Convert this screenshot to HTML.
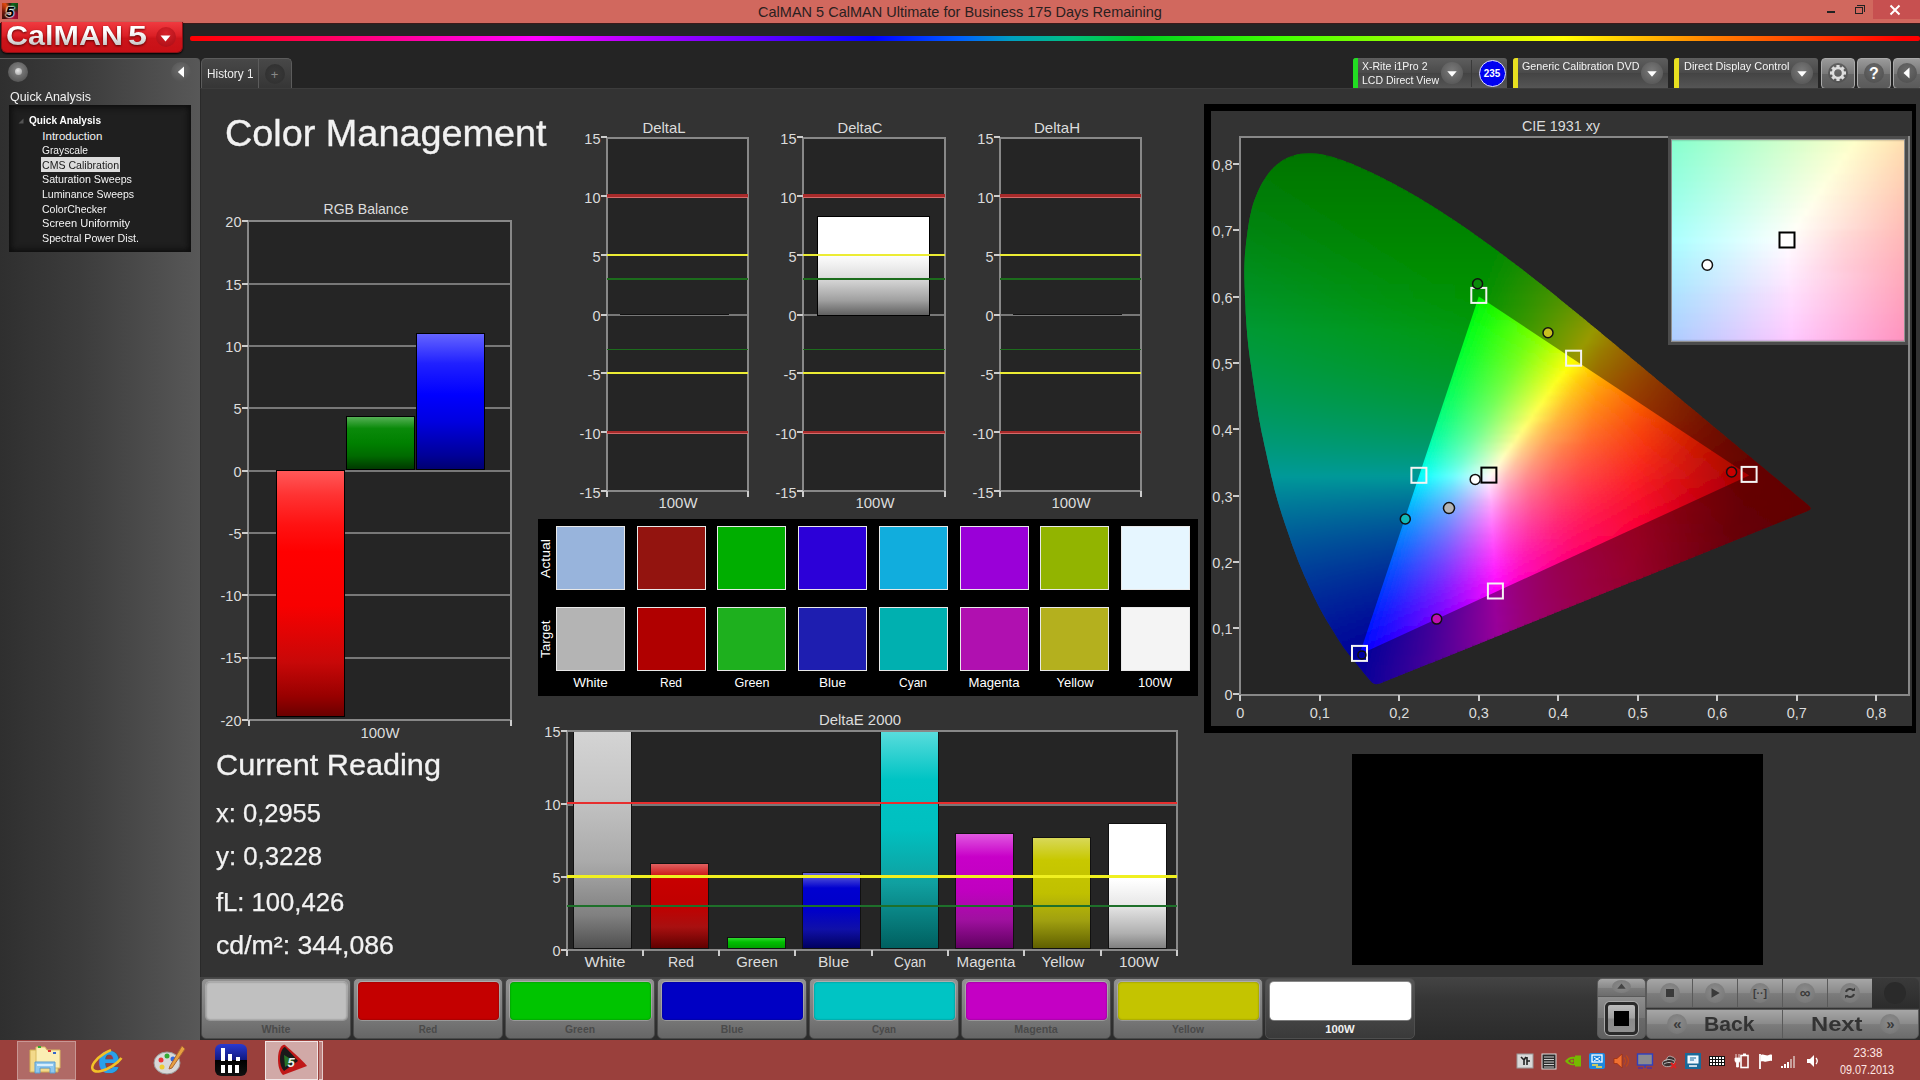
<!DOCTYPE html>
<html><head><meta charset="utf-8"><title>CalMAN 5</title>
<style>
html,body{margin:0;padding:0;background:#262626;}
body{width:1920px;height:1080px;position:relative;overflow:hidden;font-family:"Liberation Sans",sans-serif;}
div,span,svg{position:absolute;box-sizing:border-box;}
.t{white-space:nowrap;line-height:1;}
.plot{background:#252525;border:2px solid #888;}
.gl{background:#8a8a8a;height:2px;}
.bar{border:1px solid #000;}
.sw{border:1px solid #e8e8e8;}
.btn{background:linear-gradient(#a8a8a8,#8c8c8c 48%,#7a7a7a 52%,#6a6a6a);border:1px solid #555;border-radius:4px;}
.cb{border-radius:4px;background:linear-gradient(#8a8a8a,#6c6c6c);border:1px solid #555;}
.rnd{border-radius:50%;}
</style></head><body>
<div style="position:absolute;left:0px;top:0px;width:1920px;height:24px;background:#d1685e;border-bottom:1px solid #3a1a1a;"></div>
<div style="position:absolute;left:2px;top:3px;width:16px;height:16px;background:conic-gradient(from 20deg,#0a6a1a,#1a3a10 12%,#8a0a28 25%,#b0103a 40%,#3a0a08 55%,#7a1a08 70%,#e04a10 85%,#2a2010 94%,#0a6a1a);"></div>
<span class="t" style="left:5.5px;top:3.9px;font-size:15.5px;color:#000;font-weight:700;font-style:italic;text-shadow:0 0 1.5px #fff,0 0 1.5px #fff,0 0 2px #dfd,0 0 2px #fff;">5</span>
<span class="t" style="left:960.0px;top:4.3px;font-size:15px;color:#2a2020;transform:translateX(-50%) scaleX(0.967);transform-origin:50% 0;">CalMAN 5 CalMAN Ultimate for Business 175 Days Remaining</span>
<div style="position:absolute;left:1827px;top:11px;width:8px;height:2px;background:#222;"></div>
<div style="position:absolute;left:1855px;top:7px;width:8px;height:7px;border:1px solid #222;"></div>
<div style="position:absolute;left:1857px;top:5px;width:8px;height:7px;border:1px solid #222;border-left:none;border-bottom:none;"></div>
<div style="position:absolute;left:1873px;top:0px;width:47px;height:19px;background:#c75050;"></div>
<svg style="left:1889px;top:4px" width="12" height="12" viewBox="0 0 12 12"><path d="M1.5 1.5L10.5 10.5M10.5 1.5L1.5 10.5" stroke="#fff" stroke-width="2"/></svg>
<div style="position:absolute;left:0px;top:24px;width:1920px;height:65px;background:#242424;"></div>
<div style="position:absolute;left:1px;top:22px;width:182px;height:31px;background:linear-gradient(#f03a40,#dc2026 45%,#cc141a 55%,#c81016);border-radius:0 0 6px 6px;border:1px solid #8a1015;border-top:none;box-shadow:0 1px 2px #000;"></div>
<span class="t" style="left:5.5px;top:22.6px;font-size:27px;color:transparent;font-weight:700;transform:scaleX(1.130);transform-origin:0 0;background:linear-gradient(#fff 35%,#c4c4c4 85%);-webkit-background-clip:text;background-clip:text;filter:drop-shadow(0 1px 1px #5a0000);">CalMAN</span>
<span class="t" style="left:128.0px;top:21.8px;font-size:28px;color:transparent;font-weight:700;transform:scaleX(1.220);transform-origin:0 0;background:linear-gradient(#fff 35%,#c4c4c4 85%);-webkit-background-clip:text;background-clip:text;filter:drop-shadow(0 1px 1px #5a0000);">5</span>
<div style="position:absolute;left:156px;top:27px;width:20px;height:20px;background:radial-gradient(circle at 50% 30%,#d8222a,#a80c14);border-radius:50%;"></div>
<svg style="left:160px;top:35px" width="11" height="7" viewBox="0 0 11 7"><path d="M0.5 0.5H10.5L5.5 6.5Z" fill="#fff"/></svg>
<div style="position:absolute;left:190px;top:36px;width:1730px;height:4.5px;background:linear-gradient(90deg,#ff0000 0%,#ff0060 8%,#ff00c0 15%,#ff00ff 20%,#b000ff 26%,#6000ff 33%,#0000ff 39.5%,#0060ff 44.5%,#00a0c0 47.5%,#00c080 51%,#00d020 55%,#40ff00 63%,#a0ff00 71%,#ffff00 79.4%,#ff8000 88%,#ff0000 99%);filter:blur(0.7px);border-radius:2px;"></div>
<div style="position:absolute;left:0px;top:58px;width:200px;height:982px;background:linear-gradient(90deg,#2f2f2f,#3c3c3c 40%,#585858 100%);border-top:1px solid #5a5a5a;border-radius:0 4px 0 0;"></div>
<div style="position:absolute;border-radius:50%;left:8px;top:62px;width:20px;height:20px;background:radial-gradient(circle at 50% 40%,#8a8a8a,#5a5a5a 70%,#4a4a4a);"></div>
<div style="position:absolute;left:14.5px;top:67.5px;width:7px;height:7px;background:radial-gradient(circle at 40% 35%,#e8e8e8,#9a9a9a);border-radius:50%;"></div>
<div style="position:absolute;left:171px;top:62px;width:20px;height:20px;background:radial-gradient(circle at 50% 40%,#6e6e6e,#555 70%);border-radius:50%;"></div>
<svg style="left:177px;top:66px" width="8" height="12" viewBox="0 0 8 12"><path d="M7 0.5V11.5L0.8 6Z" fill="#fff"/></svg>
<span class="t" style="left:9.5px;top:89.6px;font-size:13.5px;color:#f0f0f0;transform:scaleX(0.923);transform-origin:0 0;">Quick Analysis</span>
<div style="position:absolute;left:9px;top:105px;width:182px;height:147px;background:#1f1f1f;box-shadow:inset 0 0 6px 2px #0c0c0c;"></div>
<svg style="left:18px;top:118px" width="6" height="6" viewBox="0 0 6 6"><path d="M5.5 0.5V5.5H0.5Z" fill="#555"/></svg>
<span class="t" style="left:29.0px;top:115.1px;font-size:11.5px;color:#fff;font-weight:700;transform:scaleX(0.878);transform-origin:0 0;">Quick Analysis</span>
<span class="t" style="left:42.3px;top:131.3px;font-size:11.5px;color:#f4f4f4;">Introduction</span>
<span class="t" style="left:42.3px;top:145.3px;font-size:11.5px;color:#f4f4f4;transform:scaleX(0.888);transform-origin:0 0;">Grayscale</span>
<div style="position:absolute;left:41px;top:157px;width:79px;height:15px;background:#dcdcdc;"></div>
<span class="t" style="left:42.3px;top:160.3px;font-size:11.5px;color:#1a1a1a;transform:scaleX(0.920);transform-origin:0 0;">CMS Calibration</span>
<span class="t" style="left:42.3px;top:174.3px;font-size:11.5px;color:#f4f4f4;transform:scaleX(0.932);transform-origin:0 0;">Saturation Sweeps</span>
<span class="t" style="left:42.3px;top:189.3px;font-size:11.5px;color:#f4f4f4;transform:scaleX(0.917);transform-origin:0 0;">Luminance Sweeps</span>
<span class="t" style="left:42.3px;top:204.3px;font-size:11.5px;color:#f4f4f4;transform:scaleX(0.917);transform-origin:0 0;">ColorChecker</span>
<span class="t" style="left:42.3px;top:218.3px;font-size:11.5px;color:#f4f4f4;transform:scaleX(0.963);transform-origin:0 0;">Screen Uniformity</span>
<span class="t" style="left:42.3px;top:233.3px;font-size:11.5px;color:#f4f4f4;transform:scaleX(0.931);transform-origin:0 0;">Spectral Power Dist.</span>
<div style="position:absolute;left:201px;top:58px;width:58px;height:31px;background:linear-gradient(#484848,#353535);border:1px solid #5c5c5c;border-bottom:none;border-radius:5px 0 0 0;"></div>
<div style="position:absolute;left:258px;top:58px;width:34px;height:31px;background:linear-gradient(#484848,#353535);border:1px solid #5c5c5c;border-bottom:none;border-radius:0 5px 0 0;"></div>
<span class="t" style="left:206.5px;top:67.8px;font-size:12px;color:#eee;transform:scaleX(0.982);transform-origin:0 0;">History 1</span>
<div style="position:absolute;left:265px;top:64px;width:20px;height:20px;background:radial-gradient(circle,#3a3a3a,#2e2e2e);border-radius:50%;"></div>
<span class="t" style="left:274.5px;top:68.0px;font-size:13px;color:#888;transform:translateX(-50%);transform-origin:50% 0;">+</span>
<div style="position:absolute;left:1353px;top:58px;width:154px;height:30px;background:linear-gradient(#5e5e5e,#4a4a4a 50%,#444 51%,#555);border-radius:3px 3px 0 0;"></div>
<div style="position:absolute;left:1353px;top:58px;width:5px;height:30px;background:#22dd22;border-radius:3px 0 0 0;"></div>
<span class="t" style="left:1361.5px;top:61.0px;font-size:11.5px;color:#f4f4f4;transform:scaleX(0.915);transform-origin:0 0;">X-Rite i1Pro 2</span>
<span class="t" style="left:1361.5px;top:75.0px;font-size:11.5px;color:#f4f4f4;transform:scaleX(0.915);transform-origin:0 0;">LCD Direct View</span>
<div style="position:absolute;left:1441px;top:62px;width:22px;height:22px;background:radial-gradient(circle at 50% 40%,#7a7a7a,#5c5c5c 70%);border-radius:50%;"></div>
<svg style="left:1447px;top:71px" width="10" height="6" viewBox="0 0 10 6"><path d="M0.3 0.3H9.7L5 5.7Z" fill="#fff"/></svg>
<div style="position:absolute;left:1470.5px;top:60px;width:1px;height:27px;background:#3a3a3a;"></div>
<div style="position:absolute;left:1478.5px;top:59.5px;width:27px;height:27px;background:#0000f0;border:1px solid #e0e0ff;border-radius:50%;"></div>
<span class="t" style="left:1492.0px;top:68.1px;font-size:10.5px;color:#fff;font-weight:700;transform:translateX(-50%) scaleX(0.941);transform-origin:50% 0;">235</span>
<div style="position:absolute;left:1513px;top:58px;width:155px;height:30px;background:linear-gradient(#5e5e5e,#4a4a4a 50%,#444 51%,#555);border-radius:3px 3px 0 0;"></div>
<div style="position:absolute;left:1513px;top:58px;width:5px;height:30px;background:#e8e020;border-radius:3px 0 0 0;"></div>
<span class="t" style="left:1522.0px;top:61.0px;font-size:11.5px;color:#f4f4f4;transform:scaleX(0.933);transform-origin:0 0;">Generic Calibration DVD</span>
<div style="position:absolute;left:1641px;top:62px;width:22px;height:22px;background:radial-gradient(circle at 50% 40%,#7a7a7a,#5c5c5c 70%);border-radius:50%;"></div>
<svg style="left:1647px;top:71px" width="10" height="6" viewBox="0 0 10 6"><path d="M0.3 0.3H9.7L5 5.7Z" fill="#fff"/></svg>
<div style="position:absolute;left:1674px;top:58px;width:144px;height:30px;background:linear-gradient(#5e5e5e,#4a4a4a 50%,#444 51%,#555);border-radius:3px 3px 0 0;"></div>
<div style="position:absolute;left:1674px;top:58px;width:5px;height:30px;background:#e8e020;border-radius:3px 0 0 0;"></div>
<span class="t" style="left:1683.5px;top:61.0px;font-size:11.5px;color:#f4f4f4;transform:scaleX(0.949);transform-origin:0 0;">Direct Display Control</span>
<div style="position:absolute;left:1790.5px;top:62px;width:22px;height:22px;background:radial-gradient(circle at 50% 40%,#7a7a7a,#5c5c5c 70%);border-radius:50%;"></div>
<svg style="left:1796.5px;top:71px" width="10" height="6" viewBox="0 0 10 6"><path d="M0.3 0.3H9.7L5 5.7Z" fill="#fff"/></svg>
<div style="position:absolute;left:1821px;top:58px;width:34px;height:31px;background:linear-gradient(#9a9a9a,#787878 50%,#666 52%,#5a5a5a);border:1px solid #aaa;border-radius:4px;"></div>
<div style="position:absolute;left:1857px;top:58px;width:34px;height:31px;background:linear-gradient(#9a9a9a,#787878 50%,#666 52%,#5a5a5a);border:1px solid #aaa;border-radius:4px;"></div>
<div style="position:absolute;left:1893px;top:58px;width:30px;height:31px;background:linear-gradient(#9a9a9a,#787878 50%,#666 52%,#5a5a5a);border:1px solid #aaa;border-radius:4px;"></div>
<div style="position:absolute;left:1828px;top:63px;width:20px;height:20px;background:radial-gradient(circle at 50% 35%,#6a6a6a,#4c4c4c);border-radius:50%;"></div>
<div style="position:absolute;left:1864px;top:63px;width:20px;height:20px;background:radial-gradient(circle at 50% 35%,#6a6a6a,#4c4c4c);border-radius:50%;"></div>
<div style="position:absolute;left:1897px;top:63px;width:20px;height:20px;background:radial-gradient(circle at 50% 35%,#6a6a6a,#4c4c4c);border-radius:50%;"></div>
<svg style="left:1830px;top:65px" width="16" height="16" viewBox="-8 -8 16 16"><g fill="#ddd"><rect x="-1.6" y="-8" width="3.2" height="4" transform="rotate(0)"/><rect x="-1.6" y="-8" width="3.2" height="4" transform="rotate(45)"/><rect x="-1.6" y="-8" width="3.2" height="4" transform="rotate(90)"/><rect x="-1.6" y="-8" width="3.2" height="4" transform="rotate(135)"/><rect x="-1.6" y="-8" width="3.2" height="4" transform="rotate(180)"/><rect x="-1.6" y="-8" width="3.2" height="4" transform="rotate(225)"/><rect x="-1.6" y="-8" width="3.2" height="4" transform="rotate(270)"/><rect x="-1.6" y="-8" width="3.2" height="4" transform="rotate(315)"/></g><circle r="5" fill="none" stroke="#ddd" stroke-width="2.4"/></svg>
<span class="t" style="left:1874.0px;top:66.0px;font-size:16px;color:#fff;font-weight:700;transform:translateX(-50%);transform-origin:50% 0;">?</span>
<svg style="left:1903px;top:67px" width="7" height="12" viewBox="0 0 7 12"><path d="M6.5 0.5V11.5L0.5 6Z" fill="#fff"/></svg>
<div style="position:absolute;left:200px;top:88px;width:1720px;height:890px;background:#333;border-left:1px solid #2a2a2a;border-top:1px solid #3c3c3c;"></div>
<span class="t" style="left:224.8px;top:116.4px;font-size:36.5px;color:#f2f2f2;transform:scaleX(1.036);transform-origin:0 0;-webkit-text-stroke:.35px #f2f2f2;">Color Management</span>
<span class="t" style="left:366.0px;top:201.7px;font-size:14.5px;color:#dcdcdc;transform:translateX(-50%) scaleX(0.967);transform-origin:50% 0;">RGB Balance</span>
<div class="plot" style="position:absolute;left:247px;top:220px;width:265px;height:501px;"></div>
<div style="position:absolute;left:249px;top:283px;width:261px;height:2px;background:#787878;"></div>
<div style="position:absolute;left:249px;top:345px;width:261px;height:2px;background:#787878;"></div>
<div style="position:absolute;left:249px;top:407px;width:261px;height:2px;background:#787878;"></div>
<div style="position:absolute;left:249px;top:470px;width:261px;height:2px;background:#787878;"></div>
<div style="position:absolute;left:249px;top:532px;width:261px;height:2px;background:#787878;"></div>
<div style="position:absolute;left:249px;top:594px;width:261px;height:2px;background:#787878;"></div>
<div style="position:absolute;left:249px;top:657px;width:261px;height:2px;background:#787878;"></div>
<div style="position:absolute;left:242px;top:220px;width:6px;height:2px;background:#ccc;"></div>
<span class="t" style="left:241.5px;top:215.3px;font-size:14.5px;color:#dcdcdc;transform:translateX(-100%);transform-origin:100% 0;">20</span>
<div style="position:absolute;left:242px;top:283px;width:6px;height:2px;background:#ccc;"></div>
<span class="t" style="left:241.5px;top:277.6px;font-size:14.5px;color:#dcdcdc;transform:translateX(-100%);transform-origin:100% 0;">15</span>
<div style="position:absolute;left:242px;top:345px;width:6px;height:2px;background:#ccc;"></div>
<span class="t" style="left:241.5px;top:339.9px;font-size:14.5px;color:#dcdcdc;transform:translateX(-100%);transform-origin:100% 0;">10</span>
<div style="position:absolute;left:242px;top:407px;width:6px;height:2px;background:#ccc;"></div>
<span class="t" style="left:241.5px;top:402.2px;font-size:14.5px;color:#dcdcdc;transform:translateX(-100%);transform-origin:100% 0;">5</span>
<div style="position:absolute;left:242px;top:470px;width:6px;height:2px;background:#ccc;"></div>
<span class="t" style="left:241.5px;top:464.5px;font-size:14.5px;color:#dcdcdc;transform:translateX(-100%);transform-origin:100% 0;">0</span>
<div style="position:absolute;left:242px;top:532px;width:6px;height:2px;background:#ccc;"></div>
<span class="t" style="left:241.5px;top:526.8px;font-size:14.5px;color:#dcdcdc;transform:translateX(-100%);transform-origin:100% 0;">-5</span>
<div style="position:absolute;left:242px;top:594px;width:6px;height:2px;background:#ccc;"></div>
<span class="t" style="left:241.5px;top:589.1px;font-size:14.5px;color:#dcdcdc;transform:translateX(-100%);transform-origin:100% 0;">-10</span>
<div style="position:absolute;left:242px;top:657px;width:6px;height:2px;background:#ccc;"></div>
<span class="t" style="left:241.5px;top:651.4px;font-size:14.5px;color:#dcdcdc;transform:translateX(-100%);transform-origin:100% 0;">-15</span>
<div style="position:absolute;left:242px;top:719px;width:6px;height:2px;background:#ccc;"></div>
<span class="t" style="left:241.5px;top:713.7px;font-size:14.5px;color:#dcdcdc;transform:translateX(-100%);transform-origin:100% 0;">-20</span>
<div style="position:absolute;left:248px;top:720px;width:2px;height:6px;background:#ccc;"></div>
<div style="position:absolute;left:510px;top:720px;width:2px;height:6px;background:#ccc;"></div>
<div class="bar" style="position:absolute;left:276px;top:470px;width:69px;height:247px;background:linear-gradient(#ff5858,#ff3232 10%,#ff1212 22%,#ff0000 33%,#f80000 55%,#c80808 78%,#980000 92%,#6a0000);"></div>
<div class="bar" style="position:absolute;left:346px;top:416px;width:69px;height:54px;background:linear-gradient(#55b055,#0a8a0a 22%,#008000 50%,#006a00 75%,#003800);"></div>
<div class="bar" style="position:absolute;left:416px;top:333px;width:69px;height:137px;background:linear-gradient(#6464ff,#2020ff 22%,#0000ff 45%,#0000e0 65%,#000098 90%,#000070);"></div>
<span class="t" style="left:379.5px;top:725.7px;font-size:14.5px;color:#dcdcdc;transform:translateX(-50%) scaleX(1.029);transform-origin:50% 0;">100W</span>
<span class="t" style="left:215.5px;top:750.1px;font-size:30px;color:#f2f2f2;transform:scaleX(1.022);transform-origin:0 0;-webkit-text-stroke:.3px #f2f2f2;">Current Reading</span>
<span class="t" style="left:215.5px;top:801.0px;font-size:25px;color:#f2f2f2;transform:scaleX(1.021);transform-origin:0 0;-webkit-text-stroke:.25px #f2f2f2;">x: 0,2955</span>
<span class="t" style="left:215.5px;top:844.0px;font-size:25px;color:#f2f2f2;transform:scaleX(1.031);transform-origin:0 0;-webkit-text-stroke:.25px #f2f2f2;">y: 0,3228</span>
<span class="t" style="left:215.5px;top:889.8px;font-size:25px;color:#f2f2f2;transform:scaleX(1.025);transform-origin:0 0;-webkit-text-stroke:.25px #f2f2f2;">fL: 100,426</span>
<span class="t" style="left:215.5px;top:933.1px;font-size:25px;color:#f2f2f2;transform:scaleX(1.067);transform-origin:0 0;-webkit-text-stroke:.25px #f2f2f2;">cd/m²: 344,086</span>
<span class="t" style="left:663.5px;top:120.7px;font-size:14.5px;color:#dcdcdc;transform:translateX(-50%) scaleX(1.026);transform-origin:50% 0;">DeltaL</span>
<div class="plot" style="position:absolute;left:606px;top:137px;width:143px;height:355px;"></div>
<div style="position:absolute;left:608px;top:314px;width:139px;height:2px;background:#787878;"></div>
<div style="position:absolute;left:620px;top:314px;width:109px;height:1px;background:#111;"></div>
<div style="position:absolute;left:607px;top:194.42000000000004px;width:141px;height:3px;background:#a82a2a;"></div>
<div style="position:absolute;left:607px;top:197.22000000000003px;width:141px;height:1px;background:#d46a6a;"></div>
<div style="position:absolute;left:607px;top:430.58px;width:141px;height:3px;background:#a82a2a;"></div>
<div style="position:absolute;left:607px;top:433.38px;width:141px;height:1px;background:#d46a6a;"></div>
<div style="position:absolute;left:607px;top:253.86000000000004px;width:141px;height:2.4px;background:#ecec34;"></div>
<div style="position:absolute;left:607px;top:371.94000000000005px;width:141px;height:2.4px;background:#ecec34;"></div>
<div style="position:absolute;left:607px;top:277.72600000000006px;width:141px;height:1.9px;background:#1c6c1c;"></div>
<div style="position:absolute;left:607px;top:348.574px;width:141px;height:1.9px;background:#1c6c1c;"></div>
<div style="position:absolute;left:601px;top:136px;width:6px;height:2px;background:#ccc;"></div>
<span class="t" style="left:600.5px;top:131.5px;font-size:14.5px;color:#dcdcdc;transform:translateX(-100%);transform-origin:100% 0;">15</span>
<div style="position:absolute;left:601px;top:195px;width:6px;height:2px;background:#ccc;"></div>
<span class="t" style="left:600.5px;top:190.5px;font-size:14.5px;color:#dcdcdc;transform:translateX(-100%);transform-origin:100% 0;">10</span>
<div style="position:absolute;left:601px;top:254px;width:6px;height:2px;background:#ccc;"></div>
<span class="t" style="left:600.5px;top:249.6px;font-size:14.5px;color:#dcdcdc;transform:translateX(-100%);transform-origin:100% 0;">5</span>
<div style="position:absolute;left:601px;top:314px;width:6px;height:2px;background:#ccc;"></div>
<span class="t" style="left:600.5px;top:308.6px;font-size:14.5px;color:#dcdcdc;transform:translateX(-100%);transform-origin:100% 0;">0</span>
<div style="position:absolute;left:601px;top:372px;width:6px;height:2px;background:#ccc;"></div>
<span class="t" style="left:600.5px;top:367.7px;font-size:14.5px;color:#dcdcdc;transform:translateX(-100%);transform-origin:100% 0;">-5</span>
<div style="position:absolute;left:601px;top:431px;width:6px;height:2px;background:#ccc;"></div>
<span class="t" style="left:600.5px;top:426.7px;font-size:14.5px;color:#dcdcdc;transform:translateX(-100%);transform-origin:100% 0;">-10</span>
<div style="position:absolute;left:601px;top:490px;width:6px;height:2px;background:#ccc;"></div>
<span class="t" style="left:600.5px;top:485.7px;font-size:14.5px;color:#dcdcdc;transform:translateX(-100%);transform-origin:100% 0;">-15</span>
<div style="position:absolute;left:606px;top:491px;width:2px;height:6px;background:#ccc;"></div>
<div style="position:absolute;left:747px;top:491px;width:2px;height:6px;background:#ccc;"></div>
<span class="t" style="left:678.0px;top:495.7px;font-size:14.5px;color:#dcdcdc;transform:translateX(-50%) scaleX(1.029);transform-origin:50% 0;">100W</span>
<span class="t" style="left:860.0px;top:120.7px;font-size:14.5px;color:#dcdcdc;transform:translateX(-50%) scaleX(1.015);transform-origin:50% 0;">DeltaC</span>
<div class="plot" style="position:absolute;left:802px;top:137px;width:144px;height:355px;"></div>
<div style="position:absolute;left:804px;top:314px;width:140px;height:2px;background:#787878;"></div>
<div class="bar" style="position:absolute;left:817px;top:216px;width:113px;height:100px;background:linear-gradient(#fff,#fff 38%,#e0e0e0 60%,#a0a0a0 85%,#606060);"></div>
<div style="position:absolute;left:803px;top:194.42000000000004px;width:142px;height:3px;background:#a82a2a;"></div>
<div style="position:absolute;left:803px;top:197.22000000000003px;width:142px;height:1px;background:#d46a6a;"></div>
<div style="position:absolute;left:803px;top:430.58px;width:142px;height:3px;background:#a82a2a;"></div>
<div style="position:absolute;left:803px;top:433.38px;width:142px;height:1px;background:#d46a6a;"></div>
<div style="position:absolute;left:803px;top:253.86000000000004px;width:142px;height:2.4px;background:#ecec34;"></div>
<div style="position:absolute;left:803px;top:371.94000000000005px;width:142px;height:2.4px;background:#ecec34;"></div>
<div style="position:absolute;left:803px;top:277.72600000000006px;width:142px;height:1.9px;background:#1c6c1c;"></div>
<div style="position:absolute;left:803px;top:348.574px;width:142px;height:1.9px;background:#1c6c1c;"></div>
<div style="position:absolute;left:797px;top:136px;width:6px;height:2px;background:#ccc;"></div>
<span class="t" style="left:796.5px;top:131.5px;font-size:14.5px;color:#dcdcdc;transform:translateX(-100%);transform-origin:100% 0;">15</span>
<div style="position:absolute;left:797px;top:195px;width:6px;height:2px;background:#ccc;"></div>
<span class="t" style="left:796.5px;top:190.5px;font-size:14.5px;color:#dcdcdc;transform:translateX(-100%);transform-origin:100% 0;">10</span>
<div style="position:absolute;left:797px;top:254px;width:6px;height:2px;background:#ccc;"></div>
<span class="t" style="left:796.5px;top:249.6px;font-size:14.5px;color:#dcdcdc;transform:translateX(-100%);transform-origin:100% 0;">5</span>
<div style="position:absolute;left:797px;top:314px;width:6px;height:2px;background:#ccc;"></div>
<span class="t" style="left:796.5px;top:308.6px;font-size:14.5px;color:#dcdcdc;transform:translateX(-100%);transform-origin:100% 0;">0</span>
<div style="position:absolute;left:797px;top:372px;width:6px;height:2px;background:#ccc;"></div>
<span class="t" style="left:796.5px;top:367.7px;font-size:14.5px;color:#dcdcdc;transform:translateX(-100%);transform-origin:100% 0;">-5</span>
<div style="position:absolute;left:797px;top:431px;width:6px;height:2px;background:#ccc;"></div>
<span class="t" style="left:796.5px;top:426.7px;font-size:14.5px;color:#dcdcdc;transform:translateX(-100%);transform-origin:100% 0;">-10</span>
<div style="position:absolute;left:797px;top:490px;width:6px;height:2px;background:#ccc;"></div>
<span class="t" style="left:796.5px;top:485.7px;font-size:14.5px;color:#dcdcdc;transform:translateX(-100%);transform-origin:100% 0;">-15</span>
<div style="position:absolute;left:802px;top:491px;width:2px;height:6px;background:#ccc;"></div>
<div style="position:absolute;left:944px;top:491px;width:2px;height:6px;background:#ccc;"></div>
<span class="t" style="left:874.5px;top:495.7px;font-size:14.5px;color:#dcdcdc;transform:translateX(-50%) scaleX(1.029);transform-origin:50% 0;">100W</span>
<span class="t" style="left:1056.5px;top:120.7px;font-size:14.5px;color:#dcdcdc;transform:translateX(-50%) scaleX(1.038);transform-origin:50% 0;">DeltaH</span>
<div class="plot" style="position:absolute;left:999px;top:137px;width:143px;height:355px;"></div>
<div style="position:absolute;left:1001px;top:314px;width:139px;height:2px;background:#787878;"></div>
<div style="position:absolute;left:1013px;top:314px;width:109px;height:1px;background:#111;"></div>
<div style="position:absolute;left:1000px;top:194.42000000000004px;width:141px;height:3px;background:#a82a2a;"></div>
<div style="position:absolute;left:1000px;top:197.22000000000003px;width:141px;height:1px;background:#d46a6a;"></div>
<div style="position:absolute;left:1000px;top:430.58px;width:141px;height:3px;background:#a82a2a;"></div>
<div style="position:absolute;left:1000px;top:433.38px;width:141px;height:1px;background:#d46a6a;"></div>
<div style="position:absolute;left:1000px;top:253.86000000000004px;width:141px;height:2.4px;background:#ecec34;"></div>
<div style="position:absolute;left:1000px;top:371.94000000000005px;width:141px;height:2.4px;background:#ecec34;"></div>
<div style="position:absolute;left:1000px;top:277.72600000000006px;width:141px;height:1.9px;background:#1c6c1c;"></div>
<div style="position:absolute;left:1000px;top:348.574px;width:141px;height:1.9px;background:#1c6c1c;"></div>
<div style="position:absolute;left:994px;top:136px;width:6px;height:2px;background:#ccc;"></div>
<span class="t" style="left:993.5px;top:131.5px;font-size:14.5px;color:#dcdcdc;transform:translateX(-100%);transform-origin:100% 0;">15</span>
<div style="position:absolute;left:994px;top:195px;width:6px;height:2px;background:#ccc;"></div>
<span class="t" style="left:993.5px;top:190.5px;font-size:14.5px;color:#dcdcdc;transform:translateX(-100%);transform-origin:100% 0;">10</span>
<div style="position:absolute;left:994px;top:254px;width:6px;height:2px;background:#ccc;"></div>
<span class="t" style="left:993.5px;top:249.6px;font-size:14.5px;color:#dcdcdc;transform:translateX(-100%);transform-origin:100% 0;">5</span>
<div style="position:absolute;left:994px;top:314px;width:6px;height:2px;background:#ccc;"></div>
<span class="t" style="left:993.5px;top:308.6px;font-size:14.5px;color:#dcdcdc;transform:translateX(-100%);transform-origin:100% 0;">0</span>
<div style="position:absolute;left:994px;top:372px;width:6px;height:2px;background:#ccc;"></div>
<span class="t" style="left:993.5px;top:367.7px;font-size:14.5px;color:#dcdcdc;transform:translateX(-100%);transform-origin:100% 0;">-5</span>
<div style="position:absolute;left:994px;top:431px;width:6px;height:2px;background:#ccc;"></div>
<span class="t" style="left:993.5px;top:426.7px;font-size:14.5px;color:#dcdcdc;transform:translateX(-100%);transform-origin:100% 0;">-10</span>
<div style="position:absolute;left:994px;top:490px;width:6px;height:2px;background:#ccc;"></div>
<span class="t" style="left:993.5px;top:485.7px;font-size:14.5px;color:#dcdcdc;transform:translateX(-100%);transform-origin:100% 0;">-15</span>
<div style="position:absolute;left:999px;top:491px;width:2px;height:6px;background:#ccc;"></div>
<div style="position:absolute;left:1140px;top:491px;width:2px;height:6px;background:#ccc;"></div>
<span class="t" style="left:1071.0px;top:495.7px;font-size:14.5px;color:#dcdcdc;transform:translateX(-50%) scaleX(1.029);transform-origin:50% 0;">100W</span>
<div style="position:absolute;left:538px;top:519px;width:660px;height:177px;background:#000;"></div>
<div class="sw" style="position:absolute;left:556px;top:526px;width:69px;height:64px;background:#98b4dc;"></div>
<div class="sw" style="position:absolute;left:556px;top:607px;width:69px;height:64px;background:#b4b4b4;"></div>
<span class="t" style="left:590.5px;top:675.6px;font-size:13.5px;color:#fff;transform:translateX(-50%);transform-origin:50% 0;">White</span>
<div class="sw" style="position:absolute;left:637px;top:526px;width:69px;height:64px;background:#93140f;"></div>
<div class="sw" style="position:absolute;left:637px;top:607px;width:69px;height:64px;background:#b00000;"></div>
<span class="t" style="left:671.2px;top:675.6px;font-size:13.5px;color:#fff;transform:translateX(-50%) scaleX(0.888);transform-origin:50% 0;">Red</span>
<div class="sw" style="position:absolute;left:717px;top:526px;width:69px;height:64px;background:#00ae00;"></div>
<div class="sw" style="position:absolute;left:717px;top:607px;width:69px;height:64px;background:#1eb01e;"></div>
<span class="t" style="left:751.9px;top:675.6px;font-size:13.5px;color:#fff;transform:translateX(-50%) scaleX(0.933);transform-origin:50% 0;">Green</span>
<div class="sw" style="position:absolute;left:798px;top:526px;width:69px;height:64px;background:#2c00d8;"></div>
<div class="sw" style="position:absolute;left:798px;top:607px;width:69px;height:64px;background:#1e1eb0;"></div>
<span class="t" style="left:832.6px;top:675.6px;font-size:13.5px;color:#fff;transform:translateX(-50%);transform-origin:50% 0;">Blue</span>
<div class="sw" style="position:absolute;left:879px;top:526px;width:69px;height:64px;background:#11addd;"></div>
<div class="sw" style="position:absolute;left:879px;top:607px;width:69px;height:64px;background:#00b0b0;"></div>
<span class="t" style="left:913.3px;top:675.6px;font-size:13.5px;color:#fff;transform:translateX(-50%) scaleX(0.888);transform-origin:50% 0;">Cyan</span>
<div class="sw" style="position:absolute;left:960px;top:526px;width:69px;height:64px;background:#9a00d8;"></div>
<div class="sw" style="position:absolute;left:960px;top:607px;width:69px;height:64px;background:#b010b0;"></div>
<span class="t" style="left:994.0px;top:675.6px;font-size:13.5px;color:#fff;transform:translateX(-50%) scaleX(0.971);transform-origin:50% 0;">Magenta</span>
<div class="sw" style="position:absolute;left:1040px;top:526px;width:69px;height:64px;background:#92b400;"></div>
<div class="sw" style="position:absolute;left:1040px;top:607px;width:69px;height:64px;background:#b4b01e;"></div>
<span class="t" style="left:1074.7px;top:675.6px;font-size:13.5px;color:#fff;transform:translateX(-50%) scaleX(0.960);transform-origin:50% 0;">Yellow</span>
<div class="sw" style="position:absolute;left:1121px;top:526px;width:69px;height:64px;background:#e6f6ff;"></div>
<div class="sw" style="position:absolute;left:1121px;top:607px;width:69px;height:64px;background:#f4f4f4;"></div>
<span class="t" style="left:1155.4px;top:675.6px;font-size:13.5px;color:#fff;transform:translateX(-50%) scaleX(0.964);transform-origin:50% 0;">100W</span>
<span class="t" style="left:539.0px;top:577.5px;font-size:13.5px;color:#fff;transform:rotate(-90deg) scaleX(1.039);transform-origin:0 0;">Actual</span>
<span class="t" style="left:539.0px;top:658.0px;font-size:13.5px;color:#fff;transform:rotate(-90deg);transform-origin:0 0;">Target</span>
<span class="t" style="left:860.0px;top:712.7px;font-size:14.5px;color:#dcdcdc;transform:translateX(-50%) scaleX(1.027);transform-origin:50% 0;">DeltaE 2000</span>
<div class="plot" style="position:absolute;left:566px;top:730px;width:612px;height:221px;"></div>
<div style="position:absolute;left:568px;top:804px;width:608px;height:2px;background:#787878;"></div>
<div style="position:absolute;left:568px;top:876px;width:608px;height:2px;background:#787878;"></div>
<div style="position:absolute;left:573px;top:732px;width:59px;height:217px;background:linear-gradient(#d4d4d4,#c4c4c4 30%,#aaa 60%,#808080 85%,#505050);border:1px solid #111;border-top:none;"></div>
<div style="position:absolute;left:650px;top:863px;width:59px;height:86px;background:linear-gradient(#e06060,#c80000 18%,#c00000 50%,#a81010 75%,#600000);border:1px solid #111;"></div>
<div style="position:absolute;left:727px;top:937px;width:59px;height:12px;background:linear-gradient(#30d830,#00c000 40%,#00a000);border:1px solid #111;"></div>
<div style="position:absolute;left:802px;top:872px;width:59px;height:77px;background:linear-gradient(#6868d8,#0000d0 20%,#0000c8 50%,#1010a8 75%,#000060);border:1px solid #111;"></div>
<div style="position:absolute;left:880px;top:732px;width:59px;height:217px;background:linear-gradient(#58dcdc,#00c4c4 22%,#00c0c0 45%,#10a0a0 70%,#006060);border:1px solid #111;border-top:none;"></div>
<div style="position:absolute;left:955px;top:833px;width:59px;height:116px;background:linear-gradient(#e058e0,#c800c8 20%,#c000c0 50%,#a010a0 75%,#600060);border:1px solid #111;"></div>
<div style="position:absolute;left:1032px;top:837px;width:59px;height:112px;background:linear-gradient(#d8d858,#c8c800 20%,#c0c000 50%,#a0a010 75%,#606000);border:1px solid #111;"></div>
<div style="position:absolute;left:1108px;top:823px;width:59px;height:126px;background:linear-gradient(#fff,#fff 45%,#e8e8e8 65%,#b0b0b0 88%,#808080);border:1px solid #111;"></div>
<div style="position:absolute;left:567px;top:801.75px;width:610px;height:2.5px;background:#e62e2e;"></div>
<div style="position:absolute;left:567px;top:875.4000000000001px;width:610px;height:2.6px;background:#f0f020;"></div>
<div style="position:absolute;left:567px;top:904.62px;width:610px;height:2.4px;background:#1e702a;"></div>
<div style="position:absolute;left:561px;top:730px;width:6px;height:2px;background:#ccc;"></div>
<span class="t" style="left:560.5px;top:725.3px;font-size:14.5px;color:#dcdcdc;transform:translateX(-100%);transform-origin:100% 0;">15</span>
<div style="position:absolute;left:561px;top:803px;width:6px;height:2px;background:#ccc;"></div>
<span class="t" style="left:560.5px;top:798.1px;font-size:14.5px;color:#dcdcdc;transform:translateX(-100%);transform-origin:100% 0;">10</span>
<div style="position:absolute;left:561px;top:876px;width:6px;height:2px;background:#ccc;"></div>
<span class="t" style="left:560.5px;top:870.9px;font-size:14.5px;color:#dcdcdc;transform:translateX(-100%);transform-origin:100% 0;">5</span>
<div style="position:absolute;left:561px;top:949px;width:6px;height:2px;background:#ccc;"></div>
<span class="t" style="left:560.5px;top:943.7px;font-size:14.5px;color:#dcdcdc;transform:translateX(-100%);transform-origin:100% 0;">0</span>
<div style="position:absolute;left:566px;top:950px;width:2px;height:6px;background:#ccc;"></div>
<div style="position:absolute;left:642px;top:950px;width:2px;height:6px;background:#ccc;"></div>
<div style="position:absolute;left:718px;top:950px;width:2px;height:6px;background:#ccc;"></div>
<div style="position:absolute;left:794px;top:950px;width:2px;height:6px;background:#ccc;"></div>
<div style="position:absolute;left:871px;top:950px;width:2px;height:6px;background:#ccc;"></div>
<div style="position:absolute;left:947px;top:950px;width:2px;height:6px;background:#ccc;"></div>
<div style="position:absolute;left:1023px;top:950px;width:2px;height:6px;background:#ccc;"></div>
<div style="position:absolute;left:1100px;top:950px;width:2px;height:6px;background:#ccc;"></div>
<div style="position:absolute;left:1176px;top:950px;width:2px;height:6px;background:#ccc;"></div>
<span class="t" style="left:604.6px;top:953.9px;font-size:15.5px;color:#dcdcdc;transform:translateX(-50%) scaleX(1.035);transform-origin:50% 0;">White</span>
<span class="t" style="left:681.0px;top:953.9px;font-size:15.5px;color:#dcdcdc;transform:translateX(-50%) scaleX(0.914);transform-origin:50% 0;">Red</span>
<span class="t" style="left:757.2px;top:953.9px;font-size:15.5px;color:#dcdcdc;transform:translateX(-50%) scaleX(0.963);transform-origin:50% 0;">Green</span>
<span class="t" style="left:833.5px;top:953.9px;font-size:15.5px;color:#dcdcdc;transform:translateX(-50%);transform-origin:50% 0;">Blue</span>
<span class="t" style="left:909.8px;top:953.9px;font-size:15.5px;color:#dcdcdc;transform:translateX(-50%) scaleX(0.884);transform-origin:50% 0;">Cyan</span>
<span class="t" style="left:986.1px;top:953.9px;font-size:15.5px;color:#dcdcdc;transform:translateX(-50%) scaleX(0.978);transform-origin:50% 0;">Magenta</span>
<span class="t" style="left:1062.5px;top:953.9px;font-size:15.5px;color:#dcdcdc;transform:translateX(-50%) scaleX(0.972);transform-origin:50% 0;">Yellow</span>
<span class="t" style="left:1138.8px;top:953.9px;font-size:15.5px;color:#dcdcdc;transform:translateX(-50%) scaleX(0.988);transform-origin:50% 0;">100W</span>
<div style="position:absolute;left:1352px;top:754px;width:411px;height:211px;background:#000;"></div>
<div style="position:absolute;left:1204px;top:104px;width:712px;height:629px;background:#000;"></div>
<div style="position:absolute;left:1211px;top:111px;width:701px;height:615px;background:#333;"></div>
<span class="t" style="left:1561.0px;top:118.7px;font-size:14.5px;color:#dcdcdc;transform:translateX(-50%) scaleX(0.987);transform-origin:50% 0;">CIE 1931 xy</span>
<div class="plot" style="position:absolute;left:1239px;top:136px;width:671px;height:560px;"></div>
<div style="position:absolute;left:1239px;top:695px;width:2px;height:6px;background:#ccc;"></div>
<span class="t" style="left:1240.3px;top:705.7px;font-size:14.5px;color:#dcdcdc;transform:translateX(-50%);transform-origin:50% 0;">0</span>
<div style="position:absolute;left:1233px;top:693px;width:6px;height:2px;background:#ccc;"></div>
<span class="t" style="left:1232.5px;top:688.4px;font-size:14.5px;color:#dcdcdc;transform:translateX(-100%);transform-origin:100% 0;">0</span>
<div style="position:absolute;left:1319px;top:695px;width:2px;height:6px;background:#ccc;"></div>
<span class="t" style="left:1319.8px;top:705.7px;font-size:14.5px;color:#dcdcdc;transform:translateX(-50%);transform-origin:50% 0;">0,1</span>
<div style="position:absolute;left:1233px;top:627px;width:6px;height:2px;background:#ccc;"></div>
<span class="t" style="left:1232.5px;top:622.1px;font-size:14.5px;color:#dcdcdc;transform:translateX(-100%);transform-origin:100% 0;">0,1</span>
<div style="position:absolute;left:1398px;top:695px;width:2px;height:6px;background:#ccc;"></div>
<span class="t" style="left:1399.3px;top:705.7px;font-size:14.5px;color:#dcdcdc;transform:translateX(-50%);transform-origin:50% 0;">0,2</span>
<div style="position:absolute;left:1233px;top:561px;width:6px;height:2px;background:#ccc;"></div>
<span class="t" style="left:1232.5px;top:555.8px;font-size:14.5px;color:#dcdcdc;transform:translateX(-100%);transform-origin:100% 0;">0,2</span>
<div style="position:absolute;left:1478px;top:695px;width:2px;height:6px;background:#ccc;"></div>
<span class="t" style="left:1478.8px;top:705.7px;font-size:14.5px;color:#dcdcdc;transform:translateX(-50%);transform-origin:50% 0;">0,3</span>
<div style="position:absolute;left:1233px;top:495px;width:6px;height:2px;background:#ccc;"></div>
<span class="t" style="left:1232.5px;top:489.5px;font-size:14.5px;color:#dcdcdc;transform:translateX(-100%);transform-origin:100% 0;">0,3</span>
<div style="position:absolute;left:1557px;top:695px;width:2px;height:6px;background:#ccc;"></div>
<span class="t" style="left:1558.3px;top:705.7px;font-size:14.5px;color:#dcdcdc;transform:translateX(-50%);transform-origin:50% 0;">0,4</span>
<div style="position:absolute;left:1233px;top:428px;width:6px;height:2px;background:#ccc;"></div>
<span class="t" style="left:1232.5px;top:423.2px;font-size:14.5px;color:#dcdcdc;transform:translateX(-100%);transform-origin:100% 0;">0,4</span>
<div style="position:absolute;left:1637px;top:695px;width:2px;height:6px;background:#ccc;"></div>
<span class="t" style="left:1637.8px;top:705.7px;font-size:14.5px;color:#dcdcdc;transform:translateX(-50%);transform-origin:50% 0;">0,5</span>
<div style="position:absolute;left:1233px;top:362px;width:6px;height:2px;background:#ccc;"></div>
<span class="t" style="left:1232.5px;top:356.9px;font-size:14.5px;color:#dcdcdc;transform:translateX(-100%);transform-origin:100% 0;">0,5</span>
<div style="position:absolute;left:1716px;top:695px;width:2px;height:6px;background:#ccc;"></div>
<span class="t" style="left:1717.3px;top:705.7px;font-size:14.5px;color:#dcdcdc;transform:translateX(-50%);transform-origin:50% 0;">0,6</span>
<div style="position:absolute;left:1233px;top:296px;width:6px;height:2px;background:#ccc;"></div>
<span class="t" style="left:1232.5px;top:290.6px;font-size:14.5px;color:#dcdcdc;transform:translateX(-100%);transform-origin:100% 0;">0,6</span>
<div style="position:absolute;left:1796px;top:695px;width:2px;height:6px;background:#ccc;"></div>
<span class="t" style="left:1796.8px;top:705.7px;font-size:14.5px;color:#dcdcdc;transform:translateX(-50%);transform-origin:50% 0;">0,7</span>
<div style="position:absolute;left:1233px;top:229px;width:6px;height:2px;background:#ccc;"></div>
<span class="t" style="left:1232.5px;top:224.3px;font-size:14.5px;color:#dcdcdc;transform:translateX(-100%);transform-origin:100% 0;">0,7</span>
<div style="position:absolute;left:1875px;top:695px;width:2px;height:6px;background:#ccc;"></div>
<span class="t" style="left:1876.3px;top:705.7px;font-size:14.5px;color:#dcdcdc;transform:translateX(-50%);transform-origin:50% 0;">0,8</span>
<div style="position:absolute;left:1233px;top:163px;width:6px;height:2px;background:#ccc;"></div>
<span class="t" style="left:1232.5px;top:158.0px;font-size:14.5px;color:#dcdcdc;transform:translateX(-100%);transform-origin:100% 0;">0,8</span>
<svg style="left:0;top:0" width="1920" height="1080" viewBox="0 0 1920 1080"><defs><linearGradient id="g0" gradientUnits="userSpaceOnUse" x1="1294" x2="1326"><stop offset=".000" stop-color="#00c200"/><stop offset="1.000" stop-color="#00c200"/></linearGradient><linearGradient id="g1" gradientUnits="userSpaceOnUse" x1="1286" x2="1337"><stop offset=".000" stop-color="#00c400"/><stop offset="1.000" stop-color="#00c400"/></linearGradient><linearGradient id="g2" gradientUnits="userSpaceOnUse" x1="1280" x2="1346"><stop offset=".000" stop-color="#00c500"/><stop offset="1.000" stop-color="#00c500"/></linearGradient><linearGradient id="g3" gradientUnits="userSpaceOnUse" x1="1276" x2="1354"><stop offset=".000" stop-color="#00c600"/><stop offset="1.000" stop-color="#00c600"/></linearGradient><linearGradient id="g4" gradientUnits="userSpaceOnUse" x1="1273" x2="1361"><stop offset=".000" stop-color="#00c701"/><stop offset="1.000" stop-color="#00c700"/></linearGradient><linearGradient id="g5" gradientUnits="userSpaceOnUse" x1="1270" x2="1367"><stop offset=".000" stop-color="#00c803"/><stop offset="1.000" stop-color="#00c800"/></linearGradient><linearGradient id="g6" gradientUnits="userSpaceOnUse" x1="1267" x2="1374"><stop offset=".000" stop-color="#00c904"/><stop offset="1.000" stop-color="#00c900"/></linearGradient><linearGradient id="g7" gradientUnits="userSpaceOnUse" x1="1265" x2="1380"><stop offset=".000" stop-color="#00ca05"/><stop offset="1.000" stop-color="#00ca00"/></linearGradient><linearGradient id="g8" gradientUnits="userSpaceOnUse" x1="1263" x2="1386"><stop offset=".000" stop-color="#00cb06"/><stop offset="1.000" stop-color="#00cb00"/></linearGradient><linearGradient id="g9" gradientUnits="userSpaceOnUse" x1="1261" x2="1392"><stop offset=".000" stop-color="#00cc08"/><stop offset=".333" stop-color="#00cc00"/><stop offset="1.000" stop-color="#00cc00"/></linearGradient><linearGradient id="g10" gradientUnits="userSpaceOnUse" x1="1260" x2="1397"><stop offset=".000" stop-color="#00cd09"/><stop offset=".348" stop-color="#00cd00"/><stop offset="1.000" stop-color="#00cd00"/></linearGradient><linearGradient id="g11" gradientUnits="userSpaceOnUse" x1="1258" x2="1403"><stop offset=".000" stop-color="#00ce0a"/><stop offset=".384" stop-color="#00ce00"/><stop offset="1.000" stop-color="#00ce00"/></linearGradient><linearGradient id="g12" gradientUnits="userSpaceOnUse" x1="1257" x2="1408"><stop offset=".000" stop-color="#00cf0b"/><stop offset=".395" stop-color="#00cf00"/><stop offset="1.000" stop-color="#00cf00"/></linearGradient><linearGradient id="g13" gradientUnits="userSpaceOnUse" x1="1255" x2="1414"><stop offset=".000" stop-color="#00d00c"/><stop offset=".425" stop-color="#00d000"/><stop offset="1.000" stop-color="#00d000"/></linearGradient><linearGradient id="g14" gradientUnits="userSpaceOnUse" x1="1254" x2="1419"><stop offset=".000" stop-color="#00d10e"/><stop offset=".434" stop-color="#00d100"/><stop offset="1.000" stop-color="#00d100"/></linearGradient><linearGradient id="g15" gradientUnits="userSpaceOnUse" x1="1253" x2="1424"><stop offset=".000" stop-color="#00d20f"/><stop offset=".453" stop-color="#00d200"/><stop offset="1.000" stop-color="#00d200"/></linearGradient><linearGradient id="g16" gradientUnits="userSpaceOnUse" x1="1252" x2="1429"><stop offset=".000" stop-color="#00d310"/><stop offset=".472" stop-color="#00d300"/><stop offset="1.000" stop-color="#00d300"/></linearGradient><linearGradient id="g17" gradientUnits="userSpaceOnUse" x1="1251" x2="1434"><stop offset=".000" stop-color="#00d411"/><stop offset=".489" stop-color="#00d400"/><stop offset="1.000" stop-color="#00d400"/></linearGradient><linearGradient id="g18" gradientUnits="userSpaceOnUse" x1="1250" x2="1438"><stop offset=".000" stop-color="#00d512"/><stop offset=".500" stop-color="#00d500"/><stop offset="1.000" stop-color="#00d500"/></linearGradient><linearGradient id="g19" gradientUnits="userSpaceOnUse" x1="1250" x2="1443"><stop offset=".000" stop-color="#00d613"/><stop offset=".515" stop-color="#00d600"/><stop offset="1.000" stop-color="#00d600"/></linearGradient><linearGradient id="g20" gradientUnits="userSpaceOnUse" x1="1249" x2="1448"><stop offset=".000" stop-color="#00d715"/><stop offset=".520" stop-color="#00d700"/><stop offset="1.000" stop-color="#00d700"/></linearGradient><linearGradient id="g21" gradientUnits="userSpaceOnUse" x1="1248" x2="1452"><stop offset=".000" stop-color="#00d816"/><stop offset=".539" stop-color="#00d800"/><stop offset="1.000" stop-color="#00d800"/></linearGradient><linearGradient id="g22" gradientUnits="userSpaceOnUse" x1="1248" x2="1457"><stop offset=".000" stop-color="#00d917"/><stop offset=".543" stop-color="#00d900"/><stop offset="1.000" stop-color="#00d900"/></linearGradient><linearGradient id="g23" gradientUnits="userSpaceOnUse" x1="1247" x2="1461"><stop offset=".000" stop-color="#00da19"/><stop offset=".561" stop-color="#00da00"/><stop offset="1.000" stop-color="#00da00"/></linearGradient><linearGradient id="g24" gradientUnits="userSpaceOnUse" x1="1247" x2="1466"><stop offset=".000" stop-color="#00db1a"/><stop offset=".573" stop-color="#00db00"/><stop offset="1.000" stop-color="#00db00"/></linearGradient><linearGradient id="g25" gradientUnits="userSpaceOnUse" x1="1246" x2="1470"><stop offset=".000" stop-color="#00dc1b"/><stop offset=".580" stop-color="#00dc00"/><stop offset="1.000" stop-color="#00dc00"/></linearGradient><linearGradient id="g26" gradientUnits="userSpaceOnUse" x1="1246" x2="1474"><stop offset=".000" stop-color="#00dd1d"/><stop offset=".588" stop-color="#00dd00"/><stop offset="1.000" stop-color="#00dd00"/></linearGradient><linearGradient id="g27" gradientUnits="userSpaceOnUse" x1="1245" x2="1478"><stop offset=".000" stop-color="#00de1e"/><stop offset=".598" stop-color="#00de00"/><stop offset="1.000" stop-color="#00de00"/></linearGradient><linearGradient id="g28" gradientUnits="userSpaceOnUse" x1="1245" x2="1483"><stop offset=".000" stop-color="#00df1f"/><stop offset=".605" stop-color="#00df00"/><stop offset="1.000" stop-color="#00df00"/></linearGradient><linearGradient id="g29" gradientUnits="userSpaceOnUse" x1="1245" x2="1487"><stop offset=".000" stop-color="#00e021"/><stop offset=".620" stop-color="#00e000"/><stop offset="1.000" stop-color="#00e000"/></linearGradient><linearGradient id="g30" gradientUnits="userSpaceOnUse" x1="1244" x2="1491"><stop offset=".000" stop-color="#00e122"/><stop offset=".629" stop-color="#00e100"/><stop offset="1.000" stop-color="#00e100"/></linearGradient><linearGradient id="g31" gradientUnits="userSpaceOnUse" x1="1244" x2="1495"><stop offset=".000" stop-color="#00e224"/><stop offset=".635" stop-color="#00e200"/><stop offset="1.000" stop-color="#00e200"/></linearGradient><linearGradient id="g32" gradientUnits="userSpaceOnUse" x1="1244" x2="1499"><stop offset=".000" stop-color="#00e325"/><stop offset=".641" stop-color="#00e300"/><stop offset="1.000" stop-color="#05e300"/></linearGradient><linearGradient id="g33" gradientUnits="userSpaceOnUse" x1="1244" x2="1503"><stop offset=".000" stop-color="#00e426"/><stop offset=".646" stop-color="#00e400"/><stop offset=".962" stop-color="#00e400"/><stop offset="1.000" stop-color="#0be400"/></linearGradient><linearGradient id="g34" gradientUnits="userSpaceOnUse" x1="1243" x2="1507"><stop offset=".000" stop-color="#00e628"/><stop offset=".659" stop-color="#00e600"/><stop offset=".939" stop-color="#00e600"/><stop offset="1.000" stop-color="#11e600"/></linearGradient><linearGradient id="g35" gradientUnits="userSpaceOnUse" x1="1243" x2="1511"><stop offset=".000" stop-color="#00e72a"/><stop offset=".664" stop-color="#00e700"/><stop offset=".925" stop-color="#00e700"/><stop offset="1.000" stop-color="#17e700"/></linearGradient><linearGradient id="g36" gradientUnits="userSpaceOnUse" x1="1243" x2="1515"><stop offset=".000" stop-color="#00e82b"/><stop offset=".669" stop-color="#00e800"/><stop offset=".904" stop-color="#00e800"/><stop offset="1.000" stop-color="#1ee800"/></linearGradient><linearGradient id="g37" gradientUnits="userSpaceOnUse" x1="1243" x2="1519"><stop offset=".000" stop-color="#00e92d"/><stop offset=".681" stop-color="#00e900"/><stop offset=".891" stop-color="#00e900"/><stop offset="1.000" stop-color="#25e900"/></linearGradient><linearGradient id="g38" gradientUnits="userSpaceOnUse" x1="1243" x2="1523"><stop offset=".000" stop-color="#00ea2e"/><stop offset=".686" stop-color="#00ea00"/><stop offset=".871" stop-color="#00ea00"/><stop offset="1.000" stop-color="#2cea00"/></linearGradient><linearGradient id="g39" gradientUnits="userSpaceOnUse" x1="1243" x2="1527"><stop offset=".000" stop-color="#00eb30"/><stop offset=".690" stop-color="#00eb00"/><stop offset=".859" stop-color="#00eb00"/><stop offset="1.000" stop-color="#33eb00"/></linearGradient><linearGradient id="g40" gradientUnits="userSpaceOnUse" x1="1243" x2="1531"><stop offset=".000" stop-color="#00ec32"/><stop offset=".694" stop-color="#00ec00"/><stop offset=".840" stop-color="#00ec00"/><stop offset="1.000" stop-color="#3bec00"/></linearGradient><linearGradient id="g41" gradientUnits="userSpaceOnUse" x1="1243" x2="1535"><stop offset=".000" stop-color="#00ed33"/><stop offset=".705" stop-color="#00ed00"/><stop offset=".829" stop-color="#00ed00"/><stop offset="1.000" stop-color="#43ed00"/></linearGradient><linearGradient id="g42" gradientUnits="userSpaceOnUse" x1="1243" x2="1539"><stop offset=".000" stop-color="#00ee35"/><stop offset=".709" stop-color="#00ee00"/><stop offset=".811" stop-color="#00ee00"/><stop offset="1.000" stop-color="#4bee00"/></linearGradient><linearGradient id="g43" gradientUnits="userSpaceOnUse" x1="1243" x2="1542"><stop offset=".000" stop-color="#00ef37"/><stop offset=".713" stop-color="#00ef00"/><stop offset=".800" stop-color="#00ef00"/><stop offset="1.000" stop-color="#52ef00"/></linearGradient><linearGradient id="g44" gradientUnits="userSpaceOnUse" x1="1243" x2="1546"><stop offset=".000" stop-color="#00f039"/><stop offset=".789" stop-color="#00f000"/><stop offset="1.000" stop-color="#5bf000"/></linearGradient><linearGradient id="g45" gradientUnits="userSpaceOnUse" x1="1243" x2="1550"><stop offset=".000" stop-color="#00f13a"/><stop offset=".773" stop-color="#00f100"/><stop offset="1.000" stop-color="#65f100"/></linearGradient><linearGradient id="g46" gradientUnits="userSpaceOnUse" x1="1243" x2="1554"><stop offset=".000" stop-color="#00f23c"/><stop offset=".763" stop-color="#00f200"/><stop offset="1.000" stop-color="#6ef200"/></linearGradient><linearGradient id="g47" gradientUnits="userSpaceOnUse" x1="1243" x2="1557"><stop offset=".000" stop-color="#00f33e"/><stop offset=".752" stop-color="#00f300"/><stop offset="1.000" stop-color="#77f300"/></linearGradient><linearGradient id="g48" gradientUnits="userSpaceOnUse" x1="1243" x2="1561"><stop offset=".000" stop-color="#00f440"/><stop offset=".742" stop-color="#01f400"/><stop offset="1.000" stop-color="#81f400"/></linearGradient><linearGradient id="g49" gradientUnits="userSpaceOnUse" x1="1244" x2="1565"><stop offset=".000" stop-color="#00f542"/><stop offset=".727" stop-color="#00f503"/><stop offset=".863" stop-color="#41f500"/><stop offset="1.000" stop-color="#8cf500"/></linearGradient><linearGradient id="g50" gradientUnits="userSpaceOnUse" x1="1244" x2="1568"><stop offset=".000" stop-color="#00f644"/><stop offset=".716" stop-color="#00f605"/><stop offset=".858" stop-color="#45f600"/><stop offset="1.000" stop-color="#96f600"/></linearGradient><linearGradient id="g51" gradientUnits="userSpaceOnUse" x1="1244" x2="1572"><stop offset=".000" stop-color="#00f746"/><stop offset=".707" stop-color="#01f707"/><stop offset=".860" stop-color="#4ef700"/><stop offset="1.000" stop-color="#a2f700"/></linearGradient><linearGradient id="g52" gradientUnits="userSpaceOnUse" x1="1244" x2="1576"><stop offset=".000" stop-color="#00f848"/><stop offset=".693" stop-color="#00f809"/><stop offset=".849" stop-color="#51f800"/><stop offset="1.000" stop-color="#aef800"/></linearGradient><linearGradient id="g53" gradientUnits="userSpaceOnUse" x1="1244" x2="1579"><stop offset=".000" stop-color="#00f94a"/><stop offset=".685" stop-color="#00f90c"/><stop offset=".774" stop-color="#2ef900"/><stop offset=".845" stop-color="#56f900"/><stop offset="1.000" stop-color="#b9f900"/></linearGradient><linearGradient id="g54" gradientUnits="userSpaceOnUse" x1="1244" x2="1583"><stop offset=".000" stop-color="#00fa4c"/><stop offset=".671" stop-color="#00fa0e"/><stop offset=".776" stop-color="#36fa00"/><stop offset=".835" stop-color="#59fa00"/><stop offset="1.000" stop-color="#c7fa00"/></linearGradient><linearGradient id="g55" gradientUnits="userSpaceOnUse" x1="1244" x2="1587"><stop offset=".000" stop-color="#00fb4f"/><stop offset=".663" stop-color="#00fb10"/><stop offset=".779" stop-color="#40fb00"/><stop offset=".837" stop-color="#63fb00"/><stop offset="1.000" stop-color="#d5fb00"/></linearGradient><linearGradient id="g56" gradientUnits="userSpaceOnUse" x1="1245" x2="1590"><stop offset=".000" stop-color="#00fc51"/><stop offset=".653" stop-color="#00fc13"/><stop offset=".832" stop-color="#68fc00"/><stop offset="1.000" stop-color="#e1fc00"/></linearGradient><linearGradient id="g57" gradientUnits="userSpaceOnUse" x1="1245" x2="1594"><stop offset=".000" stop-color="#00fd53"/><stop offset=".646" stop-color="#01fd15"/><stop offset=".834" stop-color="#73fd00"/><stop offset="1.000" stop-color="#f1fd00"/></linearGradient><linearGradient id="g58" gradientUnits="userSpaceOnUse" x1="1245" x2="1598"><stop offset=".000" stop-color="#00fe55"/><stop offset=".633" stop-color="#00fe18"/><stop offset=".819" stop-color="#73fe00"/><stop offset="1.000" stop-color="#fefb00"/></linearGradient><linearGradient id="g59" gradientUnits="userSpaceOnUse" x1="1245" x2="1601"><stop offset=".000" stop-color="#00ff58"/><stop offset=".624" stop-color="#00ff1b"/><stop offset=".809" stop-color="#74ff00"/><stop offset=".978" stop-color="#fbff00"/><stop offset="1.000" stop-color="#fff000"/></linearGradient><linearGradient id="g60" gradientUnits="userSpaceOnUse" x1="1245" x2="1605"><stop offset=".000" stop-color="#00ff5a"/><stop offset=".617" stop-color="#01ff1d"/><stop offset=".800" stop-color="#77ff01"/><stop offset=".961" stop-color="#fbff00"/><stop offset="1.000" stop-color="#ffe200"/></linearGradient><linearGradient id="g61" gradientUnits="userSpaceOnUse" x1="1246" x2="1609"><stop offset=".000" stop-color="#00ff5c"/><stop offset=".604" stop-color="#00ff20"/><stop offset=".786" stop-color="#77ff04"/><stop offset=".945" stop-color="#fcff00"/><stop offset="1.000" stop-color="#ffd500"/></linearGradient><linearGradient id="g62" gradientUnits="userSpaceOnUse" x1="1246" x2="1612"><stop offset=".000" stop-color="#00ff5e"/><stop offset=".596" stop-color="#00ff23"/><stop offset=".770" stop-color="#74ff08"/><stop offset=".814" stop-color="#96ff00"/><stop offset=".934" stop-color="#ffff00"/><stop offset="1.000" stop-color="#ffcb00"/></linearGradient><linearGradient id="g63" gradientUnits="userSpaceOnUse" x1="1246" x2="1616"><stop offset=".000" stop-color="#00ff60"/><stop offset=".589" stop-color="#01ff25"/><stop offset=".762" stop-color="#77ff0a"/><stop offset=".816" stop-color="#a2ff00"/><stop offset=".919" stop-color="#ffff00"/><stop offset="1.000" stop-color="#ffbf00"/></linearGradient><linearGradient id="g64" gradientUnits="userSpaceOnUse" x1="1247" x2="1619"><stop offset=".000" stop-color="#00ff62"/><stop offset=".581" stop-color="#01ff28"/><stop offset=".753" stop-color="#78ff0d"/><stop offset=".823" stop-color="#b2ff00"/><stop offset=".903" stop-color="#fdff00"/><stop offset="1.000" stop-color="#ffb600"/></linearGradient><linearGradient id="g65" gradientUnits="userSpaceOnUse" x1="1247" x2="1623"><stop offset=".000" stop-color="#00ff65"/><stop offset=".569" stop-color="#00ff2b"/><stop offset=".734" stop-color="#73ff11"/><stop offset=".824" stop-color="#c0ff00"/><stop offset=".888" stop-color="#fdff00"/><stop offset=".941" stop-color="#ffd200"/><stop offset="1.000" stop-color="#feab00"/></linearGradient><linearGradient id="g66" gradientUnits="userSpaceOnUse" x1="1247" x2="1627"><stop offset=".000" stop-color="#00ff67"/><stop offset=".563" stop-color="#01ff2e"/><stop offset=".726" stop-color="#77ff14"/><stop offset=".826" stop-color="#cfff00"/><stop offset=".874" stop-color="#feff00"/><stop offset=".932" stop-color="#ffcd00"/><stop offset="1.000" stop-color="#fda100"/></linearGradient><linearGradient id="g67" gradientUnits="userSpaceOnUse" x1="1248" x2="1630"><stop offset=".000" stop-color="#00ff69"/><stop offset=".555" stop-color="#01ff31"/><stop offset=".712" stop-color="#74ff18"/><stop offset=".864" stop-color="#fffd00"/><stop offset=".921" stop-color="#ffcb00"/><stop offset="1.000" stop-color="#fc9900"/></linearGradient><linearGradient id="g68" gradientUnits="userSpaceOnUse" x1="1248" x2="1634"><stop offset=".000" stop-color="#00ff6c"/><stop offset=".544" stop-color="#00ff34"/><stop offset=".699" stop-color="#73ff1b"/><stop offset=".850" stop-color="#fffc00"/><stop offset=".912" stop-color="#ffc600"/><stop offset="1.000" stop-color="#fb9000"/></linearGradient><linearGradient id="g69" gradientUnits="userSpaceOnUse" x1="1249" x2="1637"><stop offset=".000" stop-color="#00ff6e"/><stop offset=".536" stop-color="#00ff37"/><stop offset=".691" stop-color="#74ff1f"/><stop offset=".835" stop-color="#ffff01"/><stop offset=".902" stop-color="#ffc300"/><stop offset="1.000" stop-color="#f98800"/></linearGradient><linearGradient id="g70" gradientUnits="userSpaceOnUse" x1="1249" x2="1641"><stop offset=".000" stop-color="#00ff70"/><stop offset=".531" stop-color="#01ff3a"/><stop offset=".684" stop-color="#78ff21"/><stop offset=".821" stop-color="#fffe05"/><stop offset=".893" stop-color="#ffbf00"/><stop offset="1.000" stop-color="#f78000"/></linearGradient><linearGradient id="g71" gradientUnits="userSpaceOnUse" x1="1249" x2="1645"><stop offset=".000" stop-color="#00ff73"/><stop offset=".520" stop-color="#00ff3d"/><stop offset=".667" stop-color="#72ff26"/><stop offset=".808" stop-color="#fffe09"/><stop offset=".884" stop-color="#ffba00"/><stop offset="1.000" stop-color="#f57700"/></linearGradient><linearGradient id="g72" gradientUnits="userSpaceOnUse" x1="1250" x2="1648"><stop offset=".000" stop-color="#00ff75"/><stop offset=".513" stop-color="#00ff41"/><stop offset=".658" stop-color="#74ff2a"/><stop offset=".794" stop-color="#feff0e"/><stop offset=".879" stop-color="#ffb400"/><stop offset="1.000" stop-color="#f37100"/></linearGradient><linearGradient id="g73" gradientUnits="userSpaceOnUse" x1="1250" x2="1652"><stop offset=".000" stop-color="#00ff78"/><stop offset=".507" stop-color="#01ff44"/><stop offset=".652" stop-color="#78ff2d"/><stop offset=".781" stop-color="#feff12"/><stop offset=".866" stop-color="#ffb300"/><stop offset=".935" stop-color="#fd8a00"/><stop offset="1.000" stop-color="#f06900"/></linearGradient><linearGradient id="g74" gradientUnits="userSpaceOnUse" x1="1251" x2="1656"><stop offset=".000" stop-color="#00ff7a"/><stop offset=".498" stop-color="#00ff47"/><stop offset=".640" stop-color="#77ff30"/><stop offset=".768" stop-color="#fffe16"/><stop offset=".808" stop-color="#ffd50b"/><stop offset=".857" stop-color="#ffaf00"/><stop offset=".931" stop-color="#fd8400"/><stop offset="1.000" stop-color="#ee6200"/></linearGradient><linearGradient id="g75" gradientUnits="userSpaceOnUse" x1="1251" x2="1659"><stop offset=".000" stop-color="#00ff7d"/><stop offset=".490" stop-color="#00ff4b"/><stop offset=".627" stop-color="#73ff35"/><stop offset=".755" stop-color="#fdff1b"/><stop offset=".804" stop-color="#ffce0d"/><stop offset=".853" stop-color="#ffa902"/><stop offset=".926" stop-color="#fc7f00"/><stop offset="1.000" stop-color="#eb5c00"/></linearGradient><linearGradient id="g76" gradientUnits="userSpaceOnUse" x1="1252" x2="1663"><stop offset=".000" stop-color="#00ff80"/><stop offset=".481" stop-color="#00ff4f"/><stop offset=".617" stop-color="#73ff39"/><stop offset=".743" stop-color="#feff20"/><stop offset=".791" stop-color="#ffcd10"/><stop offset=".840" stop-color="#ffa805"/><stop offset=".917" stop-color="#fc7c00"/><stop offset="1.000" stop-color="#e85600"/></linearGradient><linearGradient id="g77" gradientUnits="userSpaceOnUse" x1="1252" x2="1666"><stop offset=".000" stop-color="#00ff83"/><stop offset=".478" stop-color="#01ff52"/><stop offset=".614" stop-color="#79ff3c"/><stop offset=".729" stop-color="#fbff25"/><stop offset=".787" stop-color="#ffc612"/><stop offset=".836" stop-color="#ffa206"/><stop offset=".918" stop-color="#fb7500"/><stop offset="1.000" stop-color="#e65100"/></linearGradient><linearGradient id="g78" gradientUnits="userSpaceOnUse" x1="1252" x2="1670"><stop offset=".000" stop-color="#00ff86"/><stop offset=".469" stop-color="#00ff56"/><stop offset=".598" stop-color="#73ff42"/><stop offset=".718" stop-color="#fbff2a"/><stop offset=".775" stop-color="#ffc515"/><stop offset=".828" stop-color="#ff9e08"/><stop offset=".909" stop-color="#fb7200"/><stop offset="1.000" stop-color="#e24b00"/></linearGradient><linearGradient id="g79" gradientUnits="userSpaceOnUse" x1="1253" x2="1674"><stop offset=".000" stop-color="#00ff88"/><stop offset=".460" stop-color="#00ff5a"/><stop offset=".588" stop-color="#73ff46"/><stop offset=".706" stop-color="#fcff2e"/><stop offset=".758" stop-color="#ffc81a"/><stop offset=".815" stop-color="#ff9d0b"/><stop offset=".905" stop-color="#fb6d00"/><stop offset="1.000" stop-color="#df4500"/></linearGradient><linearGradient id="g80" gradientUnits="userSpaceOnUse" x1="1253" x2="1677"><stop offset=".000" stop-color="#00ff8b"/><stop offset=".458" stop-color="#01ff5e"/><stop offset=".585" stop-color="#78ff49"/><stop offset=".698" stop-color="#ffff33"/><stop offset=".750" stop-color="#ffc61e"/><stop offset=".811" stop-color="#ff980d"/><stop offset=".901" stop-color="#fa6900"/><stop offset="1.000" stop-color="#dc4100"/></linearGradient><linearGradient id="g81" gradientUnits="userSpaceOnUse" x1="1254" x2="1681"><stop offset=".000" stop-color="#00ff8e"/><stop offset=".449" stop-color="#00ff62"/><stop offset=".570" stop-color="#74ff4f"/><stop offset=".682" stop-color="#faff39"/><stop offset=".743" stop-color="#ffc020"/><stop offset=".804" stop-color="#ff930f"/><stop offset=".893" stop-color="#fa6600"/><stop offset="1.000" stop-color="#d93c00"/></linearGradient><linearGradient id="g82" gradientUnits="userSpaceOnUse" x1="1254" x2="1684"><stop offset=".000" stop-color="#00ff91"/><stop offset=".442" stop-color="#00ff66"/><stop offset=".563" stop-color="#74ff53"/><stop offset=".674" stop-color="#fdff3d"/><stop offset=".730" stop-color="#ffc225"/><stop offset=".795" stop-color="#ff9111"/><stop offset=".888" stop-color="#fa6200"/><stop offset="1.000" stop-color="#d63800"/></linearGradient><linearGradient id="g83" gradientUnits="userSpaceOnUse" x1="1255" x2="1688"><stop offset=".000" stop-color="#00ff94"/><stop offset=".433" stop-color="#00ff6a"/><stop offset=".553" stop-color="#74ff58"/><stop offset=".664" stop-color="#ffff43"/><stop offset=".719" stop-color="#ffc028"/><stop offset=".783" stop-color="#ff9014"/><stop offset=".885" stop-color="#f95d00"/><stop offset="1.000" stop-color="#d23300"/></linearGradient><linearGradient id="g84" gradientUnits="userSpaceOnUse" x1="1255" x2="1692"><stop offset=".000" stop-color="#00ff98"/><stop offset=".429" stop-color="#00ff6e"/><stop offset=".548" stop-color="#78ff5c"/><stop offset=".653" stop-color="#ffff48"/><stop offset=".708" stop-color="#ffbf2c"/><stop offset=".776" stop-color="#ff8c16"/><stop offset=".877" stop-color="#f95b02"/><stop offset="1.000" stop-color="#cf2f00"/></linearGradient><linearGradient id="g85" gradientUnits="userSpaceOnUse" x1="1256" x2="1695"><stop offset=".000" stop-color="#00ff9b"/><stop offset=".423" stop-color="#00ff73"/><stop offset=".536" stop-color="#75ff62"/><stop offset=".641" stop-color="#fdff4e"/><stop offset=".700" stop-color="#ffbc2f"/><stop offset=".768" stop-color="#ff8919"/><stop offset=".873" stop-color="#f85703"/><stop offset="1.000" stop-color="#cc2c00"/></linearGradient><linearGradient id="g86" gradientUnits="userSpaceOnUse" x1="1256" x2="1699"><stop offset=".000" stop-color="#00ff9e"/><stop offset=".414" stop-color="#00ff78"/><stop offset=".527" stop-color="#74ff67"/><stop offset=".631" stop-color="#fdff54"/><stop offset=".689" stop-color="#ffbb33"/><stop offset=".761" stop-color="#ff851a"/><stop offset=".865" stop-color="#f85404"/><stop offset="1.000" stop-color="#c82800"/></linearGradient><linearGradient id="g87" gradientUnits="userSpaceOnUse" x1="1257" x2="1702"><stop offset=".000" stop-color="#00ffa2"/><stop offset=".408" stop-color="#00ff7c"/><stop offset=".516" stop-color="#70ff6d"/><stop offset=".619" stop-color="#faff5a"/><stop offset=".686" stop-color="#ffb435"/><stop offset=".758" stop-color="#ff801c"/><stop offset=".861" stop-color="#f85106"/><stop offset="1.000" stop-color="#c62500"/></linearGradient><linearGradient id="g88" gradientUnits="userSpaceOnUse" x1="1257" x2="1706"><stop offset=".000" stop-color="#00ffa5"/><stop offset=".404" stop-color="#00ff81"/><stop offset=".511" stop-color="#74ff72"/><stop offset=".613" stop-color="#fffc5e"/><stop offset=".671" stop-color="#ffb73b"/><stop offset=".747" stop-color="#ff7f1f"/><stop offset=".853" stop-color="#f84e07"/><stop offset="1.000" stop-color="#c22100"/></linearGradient><linearGradient id="g89" gradientUnits="userSpaceOnUse" x1="1258" x2="1710"><stop offset=".000" stop-color="#00ffa9"/><stop offset=".398" stop-color="#01ff86"/><stop offset=".504" stop-color="#77ff77"/><stop offset=".602" stop-color="#fffd64"/><stop offset=".664" stop-color="#ffb23d"/><stop offset=".739" stop-color="#ff7c21"/><stop offset=".850" stop-color="#f74a08"/><stop offset="1.000" stop-color="#bf1e00"/></linearGradient><linearGradient id="g90" gradientUnits="userSpaceOnUse" x1="1258" x2="1713"><stop offset=".000" stop-color="#00ffac"/><stop offset=".390" stop-color="#00ff8b"/><stop offset=".491" stop-color="#6fff7d"/><stop offset=".592" stop-color="#fffe6b"/><stop offset=".623" stop-color="#ffd354"/><stop offset=".654" stop-color="#ffb242"/><stop offset=".732" stop-color="#ff7923"/><stop offset=".842" stop-color="#f74809"/><stop offset=".908" stop-color="#e23200"/><stop offset="1.000" stop-color="#bc1c00"/></linearGradient><linearGradient id="g91" gradientUnits="userSpaceOnUse" x1="1259" x2="1717"><stop offset=".000" stop-color="#00ffb0"/><stop offset=".384" stop-color="#00ff90"/><stop offset=".485" stop-color="#72ff83"/><stop offset=".581" stop-color="#ffff72"/><stop offset=".611" stop-color="#ffd35a"/><stop offset=".642" stop-color="#ffb247"/><stop offset=".725" stop-color="#ff7625"/><stop offset=".838" stop-color="#f6440a"/><stop offset=".908" stop-color="#de2d00"/><stop offset="1.000" stop-color="#b91900"/></linearGradient><linearGradient id="g92" gradientUnits="userSpaceOnUse" x1="1259" x2="1720"><stop offset=".000" stop-color="#00ffb4"/><stop offset=".381" stop-color="#00ff95"/><stop offset=".476" stop-color="#70ff89"/><stop offset=".571" stop-color="#feff79"/><stop offset=".576" stop-color="#fff976"/><stop offset=".606" stop-color="#ffce5d"/><stop offset=".641" stop-color="#ffaa47"/><stop offset=".723" stop-color="#ff7026"/><stop offset=".831" stop-color="#f7430c"/><stop offset=".913" stop-color="#da2900"/><stop offset="1.000" stop-color="#b71600"/></linearGradient><linearGradient id="g93" gradientUnits="userSpaceOnUse" x1="1260" x2="1724"><stop offset=".000" stop-color="#00ffb8"/><stop offset=".375" stop-color="#01ff9a"/><stop offset=".470" stop-color="#73ff8f"/><stop offset=".565" stop-color="#fffa7d"/><stop offset=".595" stop-color="#ffcf63"/><stop offset=".629" stop-color="#ffa94c"/><stop offset=".711" stop-color="#ff6f29"/><stop offset=".823" stop-color="#f7400d"/><stop offset=".914" stop-color="#d62500"/><stop offset="1.000" stop-color="#b41400"/></linearGradient><linearGradient id="g94" gradientUnits="userSpaceOnUse" x1="1261" x2="1728"><stop offset=".000" stop-color="#00ffbc"/><stop offset=".368" stop-color="#00ffa0"/><stop offset=".466" stop-color="#79ff94"/><stop offset=".551" stop-color="#ffff87"/><stop offset=".581" stop-color="#ffd26b"/><stop offset=".615" stop-color="#ffab53"/><stop offset=".701" stop-color="#ff6e2c"/><stop offset=".816" stop-color="#f73e0f"/><stop offset=".915" stop-color="#d22100"/><stop offset="1.000" stop-color="#b11200"/></linearGradient><linearGradient id="g95" gradientUnits="userSpaceOnUse" x1="1261" x2="1731"><stop offset=".000" stop-color="#00ffc0"/><stop offset=".362" stop-color="#00ffa6"/><stop offset=".451" stop-color="#6eff9c"/><stop offset=".545" stop-color="#fffc8d"/><stop offset=".574" stop-color="#ffcf6f"/><stop offset=".609" stop-color="#ffa956"/><stop offset=".698" stop-color="#ff692d"/><stop offset=".813" stop-color="#f63b10"/><stop offset=".919" stop-color="#ce1d00"/><stop offset="1.000" stop-color="#af1000"/></linearGradient><linearGradient id="g96" gradientUnits="userSpaceOnUse" x1="1262" x2="1735"><stop offset=".000" stop-color="#00ffc4"/><stop offset=".354" stop-color="#00ffac"/><stop offset=".439" stop-color="#68ffa3"/><stop offset=".536" stop-color="#fffa92"/><stop offset=".565" stop-color="#ffcd74"/><stop offset=".603" stop-color="#ffa358"/><stop offset=".692" stop-color="#ff662f"/><stop offset=".806" stop-color="#f63811"/><stop offset=".920" stop-color="#ca1a00"/><stop offset="1.000" stop-color="#ad0e00"/></linearGradient><linearGradient id="g97" gradientUnits="userSpaceOnUse" x1="1262" x2="1739"><stop offset=".000" stop-color="#00ffc8"/><stop offset=".351" stop-color="#00ffb2"/><stop offset=".435" stop-color="#6dffa9"/><stop offset=".523" stop-color="#fdff9e"/><stop offset=".527" stop-color="#fff99a"/><stop offset=".556" stop-color="#ffcc7a"/><stop offset=".594" stop-color="#ffa15c"/><stop offset=".636" stop-color="#ff8045"/><stop offset=".686" stop-color="#ff6230"/><stop offset=".799" stop-color="#f63612"/><stop offset=".921" stop-color="#c71700"/><stop offset="1.000" stop-color="#aa0c00"/></linearGradient><linearGradient id="g98" gradientUnits="userSpaceOnUse" x1="1263" x2="1742"><stop offset=".000" stop-color="#00ffcd"/><stop offset=".346" stop-color="#00ffb8"/><stop offset=".433" stop-color="#75ffb0"/><stop offset=".517" stop-color="#fffca3"/><stop offset=".546" stop-color="#ffcd82"/><stop offset=".583" stop-color="#ffa263"/><stop offset=".625" stop-color="#ff804a"/><stop offset=".675" stop-color="#ff6234"/><stop offset=".792" stop-color="#f73414"/><stop offset=".917" stop-color="#c61501"/><stop offset="1.000" stop-color="#a90a00"/></linearGradient><linearGradient id="g99" gradientUnits="userSpaceOnUse" x1="1264" x2="1746"><stop offset=".000" stop-color="#00ffd1"/><stop offset=".340" stop-color="#01ffbe"/><stop offset=".427" stop-color="#78ffb7"/><stop offset=".506" stop-color="#fffdac"/><stop offset=".535" stop-color="#ffce89"/><stop offset=".573" stop-color="#ffa268"/><stop offset=".618" stop-color="#ff7c4c"/><stop offset=".668" stop-color="#ff5f36"/><stop offset=".784" stop-color="#f73215"/><stop offset=".909" stop-color="#c61402"/><stop offset="1.000" stop-color="#a70800"/></linearGradient><linearGradient id="g100" gradientUnits="userSpaceOnUse" x1="1264" x2="1749"><stop offset=".000" stop-color="#00ffd6"/><stop offset=".333" stop-color="#00ffc5"/><stop offset=".416" stop-color="#6fffbf"/><stop offset=".498" stop-color="#ffffb6"/><stop offset=".531" stop-color="#ffc88c"/><stop offset=".568" stop-color="#ff9d6b"/><stop offset=".613" stop-color="#ff794e"/><stop offset=".663" stop-color="#ff5c38"/><stop offset=".778" stop-color="#f73117"/><stop offset=".905" stop-color="#c51202"/><stop offset="1.000" stop-color="#a60700"/></linearGradient><linearGradient id="g101" gradientUnits="userSpaceOnUse" x1="1265" x2="1753"><stop offset=".000" stop-color="#00ffdb"/><stop offset=".328" stop-color="#00ffcc"/><stop offset=".402" stop-color="#65ffc7"/><stop offset=".447" stop-color="#b0ffc3"/><stop offset=".488" stop-color="#feffbf"/><stop offset=".492" stop-color="#fff8b9"/><stop offset=".525" stop-color="#ffc38f"/><stop offset=".561" stop-color="#ff996d"/><stop offset=".607" stop-color="#ff7550"/><stop offset=".656" stop-color="#ff593a"/><stop offset=".770" stop-color="#f72e18"/><stop offset=".898" stop-color="#c51103"/><stop offset="1.000" stop-color="#a50500"/></linearGradient><linearGradient id="g102" gradientUnits="userSpaceOnUse" x1="1266" x2="1757"><stop offset=".000" stop-color="#00ffe0"/><stop offset=".321" stop-color="#00ffd3"/><stop offset=".398" stop-color="#6cffce"/><stop offset=".480" stop-color="#fffdc6"/><stop offset=".512" stop-color="#ffc698"/><stop offset=".549" stop-color="#ff9b75"/><stop offset=".593" stop-color="#ff7656"/><stop offset=".646" stop-color="#ff573d"/><stop offset=".764" stop-color="#f72c1a"/><stop offset=".935" stop-color="#b30a00"/><stop offset="1.000" stop-color="#a40400"/></linearGradient><linearGradient id="g103" gradientUnits="userSpaceOnUse" x1="1266" x2="1760"><stop offset=".000" stop-color="#00ffe5"/><stop offset=".320" stop-color="#01ffda"/><stop offset=".397" stop-color="#73ffd6"/><stop offset=".474" stop-color="#fffacd"/><stop offset=".506" stop-color="#ffc39e"/><stop offset=".543" stop-color="#ff9879"/><stop offset=".587" stop-color="#ff7359"/><stop offset=".644" stop-color="#ff533e"/><stop offset=".757" stop-color="#f82b1b"/><stop offset=".931" stop-color="#b20801"/><stop offset="1.000" stop-color="#a30200"/></linearGradient><linearGradient id="g104" gradientUnits="userSpaceOnUse" x1="1267" x2="1764"><stop offset=".000" stop-color="#00ffea"/><stop offset=".313" stop-color="#00ffe2"/><stop offset=".386" stop-color="#6dffde"/><stop offset=".462" stop-color="#feffda"/><stop offset=".466" stop-color="#fff7d3"/><stop offset=".498" stop-color="#ffc0a3"/><stop offset=".534" stop-color="#ff967d"/><stop offset=".582" stop-color="#ff6f5b"/><stop offset=".639" stop-color="#ff503f"/><stop offset=".751" stop-color="#f8281d"/><stop offset=".928" stop-color="#b10701"/><stop offset="1.000" stop-color="#a30100"/></linearGradient><linearGradient id="g105" gradientUnits="userSpaceOnUse" x1="1268" x2="1768"><stop offset=".000" stop-color="#00ffef"/><stop offset=".308" stop-color="#01ffe9"/><stop offset=".380" stop-color="#70ffe7"/><stop offset=".452" stop-color="#fdffe4"/><stop offset=".456" stop-color="#fff9de"/><stop offset=".488" stop-color="#ffc1ab"/><stop offset=".524" stop-color="#ff9583"/><stop offset=".572" stop-color="#ff6e5f"/><stop offset=".628" stop-color="#ff4e43"/><stop offset=".740" stop-color="#f9271f"/><stop offset=".924" stop-color="#b00501"/><stop offset="1.000" stop-color="#a30000"/></linearGradient><linearGradient id="g106" gradientUnits="userSpaceOnUse" x1="1268" x2="1771"><stop offset=".000" stop-color="#00fff5"/><stop offset=".302" stop-color="#00fff1"/><stop offset=".369" stop-color="#67fff0"/><stop offset=".448" stop-color="#fffae9"/><stop offset=".480" stop-color="#ffc1b3"/><stop offset=".520" stop-color="#ff9186"/><stop offset=".567" stop-color="#ff6a61"/><stop offset=".623" stop-color="#ff4c45"/><stop offset=".734" stop-color="#f92621"/><stop offset=".921" stop-color="#af0402"/><stop offset="1.000" stop-color="#a30000"/></linearGradient><linearGradient id="g107" gradientUnits="userSpaceOnUse" x1="1269" x2="1775"><stop offset=".000" stop-color="#00fffb"/><stop offset=".296" stop-color="#00fffa"/><stop offset=".368" stop-color="#71fff9"/><stop offset=".439" stop-color="#fffbf5"/><stop offset=".470" stop-color="#ffc1bc"/><stop offset=".510" stop-color="#ff908c"/><stop offset=".557" stop-color="#ff6966"/><stop offset=".617" stop-color="#ff4946"/><stop offset=".727" stop-color="#f92422"/><stop offset=".913" stop-color="#af0302"/><stop offset="1.000" stop-color="#a30000"/></linearGradient><linearGradient id="g108" gradientUnits="userSpaceOnUse" x1="1270" x2="1778"><stop offset=".000" stop-color="#00feff"/><stop offset=".291" stop-color="#00fcff"/><stop offset=".358" stop-color="#6afbff"/><stop offset=".433" stop-color="#fff6fa"/><stop offset=".465" stop-color="#ffbcc0"/><stop offset=".504" stop-color="#ff8d90"/><stop offset=".551" stop-color="#ff6669"/><stop offset=".610" stop-color="#ff4649"/><stop offset=".720" stop-color="#fa2224"/><stop offset=".909" stop-color="#ae0203"/><stop offset="1.000" stop-color="#a30000"/></linearGradient><linearGradient id="g109" gradientUnits="userSpaceOnUse" x1="1271" x2="1782"><stop offset=".000" stop-color="#00f8ff"/><stop offset=".285" stop-color="#00f4ff"/><stop offset=".352" stop-color="#67f2ff"/><stop offset=".426" stop-color="#fcf0ff"/><stop offset=".430" stop-color="#ffeaf9"/><stop offset=".461" stop-color="#ffb4c0"/><stop offset=".500" stop-color="#ff8690"/><stop offset=".551" stop-color="#ff5f67"/><stop offset=".609" stop-color="#ff4148"/><stop offset=".707" stop-color="#fb2227"/><stop offset=".801" stop-color="#da0d11"/><stop offset=".914" stop-color="#ab0003"/><stop offset="1.000" stop-color="#a30000"/></linearGradient><linearGradient id="g110" gradientUnits="userSpaceOnUse" x1="1271" x2="1786"><stop offset=".000" stop-color="#00f2ff"/><stop offset=".283" stop-color="#00ecff"/><stop offset=".353" stop-color="#6fe9ff"/><stop offset=".422" stop-color="#fce6ff"/><stop offset=".426" stop-color="#ffe1fa"/><stop offset=".461" stop-color="#ffa7bb"/><stop offset=".500" stop-color="#ff7d8e"/><stop offset=".550" stop-color="#ff5966"/><stop offset=".609" stop-color="#ff3d48"/><stop offset=".705" stop-color="#fa1e27"/><stop offset=".802" stop-color="#d60a10"/><stop offset=".911" stop-color="#aa0003"/><stop offset="1.000" stop-color="#a30000"/></linearGradient><linearGradient id="g111" gradientUnits="userSpaceOnUse" x1="1272" x2="1789"><stop offset=".000" stop-color="#00ecff"/><stop offset=".278" stop-color="#00e4ff"/><stop offset=".351" stop-color="#74e0ff"/><stop offset=".421" stop-color="#ffdcff"/><stop offset=".456" stop-color="#ffa3c0"/><stop offset=".494" stop-color="#ff7a91"/><stop offset=".544" stop-color="#ff5669"/><stop offset=".602" stop-color="#ff3a4a"/><stop offset=".699" stop-color="#fb1d29"/><stop offset=".799" stop-color="#d50911"/><stop offset=".907" stop-color="#a90003"/><stop offset="1.000" stop-color="#a30000"/></linearGradient><linearGradient id="g112" gradientUnits="userSpaceOnUse" x1="1273" x2="1793"><stop offset=".000" stop-color="#00e7ff"/><stop offset=".273" stop-color="#01dcff"/><stop offset=".342" stop-color="#6dd8ff"/><stop offset=".415" stop-color="#fcd3ff"/><stop offset=".419" stop-color="#ffcdf9"/><stop offset=".454" stop-color="#ff99bd"/><stop offset=".492" stop-color="#ff7290"/><stop offset=".542" stop-color="#ff5069"/><stop offset=".604" stop-color="#ff3549"/><stop offset=".696" stop-color="#fa1a29"/><stop offset=".800" stop-color="#d20611"/><stop offset=".904" stop-color="#a80004"/><stop offset="1.000" stop-color="#a30000"/></linearGradient><linearGradient id="g113" gradientUnits="userSpaceOnUse" x1="1274" x2="1796"><stop offset=".000" stop-color="#00e1ff"/><stop offset=".268" stop-color="#01d5ff"/><stop offset=".345" stop-color="#78cfff"/><stop offset=".414" stop-color="#ffc9fe"/><stop offset=".448" stop-color="#ff95c1"/><stop offset=".487" stop-color="#ff6f93"/><stop offset=".536" stop-color="#ff4e6b"/><stop offset=".598" stop-color="#ff334b"/><stop offset=".693" stop-color="#fa172a"/><stop offset=".797" stop-color="#d10511"/><stop offset=".900" stop-color="#a80004"/><stop offset="1.000" stop-color="#a30000"/></linearGradient><linearGradient id="g114" gradientUnits="userSpaceOnUse" x1="1274" x2="1800"><stop offset=".000" stop-color="#00dcff"/><stop offset=".262" stop-color="#00ceff"/><stop offset=".338" stop-color="#73c8ff"/><stop offset=".411" stop-color="#ffc0ff"/><stop offset=".445" stop-color="#ff8fc2"/><stop offset=".487" stop-color="#ff6791"/><stop offset=".536" stop-color="#ff486a"/><stop offset=".597" stop-color="#ff2e4a"/><stop offset=".692" stop-color="#f9142a"/><stop offset=".798" stop-color="#cd0211"/><stop offset=".897" stop-color="#a70004"/><stop offset="1.000" stop-color="#a30000"/></linearGradient><linearGradient id="g115" gradientUnits="userSpaceOnUse" x1="1275" x2="1804"><stop offset=".000" stop-color="#00d7ff"/><stop offset=".257" stop-color="#00c7ff"/><stop offset=".332" stop-color="#70c0ff"/><stop offset=".408" stop-color="#ffb6fd"/><stop offset=".442" stop-color="#ff88c2"/><stop offset=".483" stop-color="#ff6291"/><stop offset=".532" stop-color="#ff446b"/><stop offset=".592" stop-color="#ff2b4b"/><stop offset=".683" stop-color="#fa132c"/><stop offset=".785" stop-color="#d00213"/><stop offset=".891" stop-color="#a70005"/><stop offset="1.000" stop-color="#a30000"/></linearGradient><linearGradient id="g116" gradientUnits="userSpaceOnUse" x1="1276" x2="1807"><stop offset=".000" stop-color="#00d1ff"/><stop offset=".252" stop-color="#00c0ff"/><stop offset=".323" stop-color="#68b9ff"/><stop offset=".406" stop-color="#ffabfa"/><stop offset=".440" stop-color="#ff80c0"/><stop offset=".481" stop-color="#ff5c91"/><stop offset=".530" stop-color="#ff406b"/><stop offset=".594" stop-color="#ff274a"/><stop offset=".692" stop-color="#f60e29"/><stop offset=".786" stop-color="#ce0013"/><stop offset=".883" stop-color="#a80006"/><stop offset="1.000" stop-color="#a30000"/></linearGradient><linearGradient id="g117" gradientUnits="userSpaceOnUse" x1="1277" x2="1811"><stop offset=".000" stop-color="#00ccff"/><stop offset=".247" stop-color="#00baff"/><stop offset=".326" stop-color="#73b1ff"/><stop offset=".401" stop-color="#ffa5fd"/><stop offset=".434" stop-color="#ff7bc3"/><stop offset=".476" stop-color="#ff5893"/><stop offset=".528" stop-color="#ff3b6b"/><stop offset=".588" stop-color="#ff244c"/><stop offset=".685" stop-color="#f60c2a"/><stop offset=".768" stop-color="#d30016"/><stop offset=".876" stop-color="#a80006"/><stop offset="1.000" stop-color="#a30000"/></linearGradient><linearGradient id="g118" gradientUnits="userSpaceOnUse" x1="1278" x2="1812"><stop offset=".000" stop-color="#00c7ff"/><stop offset=".243" stop-color="#00b4ff"/><stop offset=".318" stop-color="#6cabff"/><stop offset=".401" stop-color="#ff9bfa"/><stop offset=".434" stop-color="#ff73c1"/><stop offset=".476" stop-color="#ff5393"/><stop offset=".528" stop-color="#ff376b"/><stop offset=".588" stop-color="#ff214c"/><stop offset=".685" stop-color="#f60a2b"/><stop offset=".753" stop-color="#da0019"/><stop offset=".876" stop-color="#a70007"/><stop offset="1.000" stop-color="#a30000"/></linearGradient><linearGradient id="g119" gradientUnits="userSpaceOnUse" x1="1279" x2="1812"><stop offset=".000" stop-color="#00c2ff"/><stop offset=".240" stop-color="#00aeff"/><stop offset=".315" stop-color="#69a4ff"/><stop offset=".397" stop-color="#fe97ff"/><stop offset=".401" stop-color="#ff92f8"/><stop offset=".434" stop-color="#ff6dc1"/><stop offset=".479" stop-color="#ff4b90"/><stop offset=".532" stop-color="#ff316a"/><stop offset=".592" stop-color="#ff1d4c"/><stop offset=".685" stop-color="#f5082c"/><stop offset=".742" stop-color="#df001d"/><stop offset=".873" stop-color="#a80008"/><stop offset="1.000" stop-color="#a30000"/></linearGradient><linearGradient id="g120" gradientUnits="userSpaceOnUse" x1="1280" x2="1807"><stop offset=".000" stop-color="#00bdff"/><stop offset=".239" stop-color="#00a8ff"/><stop offset=".318" stop-color="#6d9dff"/><stop offset=".402" stop-color="#ff8efd"/><stop offset=".436" stop-color="#ff69c5"/><stop offset=".477" stop-color="#ff4b96"/><stop offset=".530" stop-color="#ff306e"/><stop offset=".591" stop-color="#ff1c4f"/><stop offset=".689" stop-color="#f6072d"/><stop offset=".784" stop-color="#ce0016"/><stop offset=".883" stop-color="#a80008"/><stop offset="1.000" stop-color="#a30000"/></linearGradient><linearGradient id="g121" gradientUnits="userSpaceOnUse" x1="1281" x2="1800"><stop offset=".000" stop-color="#00b8ff"/><stop offset=".238" stop-color="#00a2ff"/><stop offset=".319" stop-color="#6c97ff"/><stop offset=".404" stop-color="#fd88ff"/><stop offset=".408" stop-color="#ff85fa"/><stop offset=".442" stop-color="#ff62c3"/><stop offset=".485" stop-color="#ff4596"/><stop offset=".535" stop-color="#ff2e71"/><stop offset=".596" stop-color="#ff1a51"/><stop offset=".696" stop-color="#f7052f"/><stop offset=".792" stop-color="#cf0017"/><stop offset=".892" stop-color="#a80009"/><stop offset="1.000" stop-color="#a30001"/></linearGradient><linearGradient id="g122" gradientUnits="userSpaceOnUse" x1="1282" x2="1792"><stop offset=".000" stop-color="#00b3ff"/><stop offset=".239" stop-color="#009cff"/><stop offset=".325" stop-color="#7190ff"/><stop offset=".412" stop-color="#ff7ffd"/><stop offset=".447" stop-color="#ff5ec6"/><stop offset=".490" stop-color="#ff4298"/><stop offset=".541" stop-color="#ff2b73"/><stop offset=".600" stop-color="#ff1955"/><stop offset=".694" stop-color="#fa0534"/><stop offset=".796" stop-color="#d20019"/><stop offset=".902" stop-color="#a9000a"/><stop offset="1.000" stop-color="#a30003"/></linearGradient><linearGradient id="g123" gradientUnits="userSpaceOnUse" x1="1283" x2="1785"><stop offset=".000" stop-color="#00afff"/><stop offset=".239" stop-color="#0097ff"/><stop offset=".323" stop-color="#698bff"/><stop offset=".414" stop-color="#fd7aff"/><stop offset=".418" stop-color="#ff77fa"/><stop offset=".454" stop-color="#ff57c4"/><stop offset=".494" stop-color="#ff3f9b"/><stop offset=".546" stop-color="#ff2875"/><stop offset=".606" stop-color="#ff1757"/><stop offset=".701" stop-color="#fa0436"/><stop offset=".801" stop-color="#d5001b"/><stop offset=".912" stop-color="#a9000b"/><stop offset="1.000" stop-color="#a30004"/></linearGradient><linearGradient id="g124" gradientUnits="userSpaceOnUse" x1="1284" x2="1777"><stop offset=".000" stop-color="#00aaff"/><stop offset=".239" stop-color="#0091ff"/><stop offset=".332" stop-color="#7284ff"/><stop offset=".421" stop-color="#ff73ff"/><stop offset=".457" stop-color="#ff54c9"/><stop offset=".498" stop-color="#ff3c9f"/><stop offset=".547" stop-color="#ff287b"/><stop offset=".607" stop-color="#ff165b"/><stop offset=".717" stop-color="#f90135"/><stop offset=".911" stop-color="#ae000d"/><stop offset="1.000" stop-color="#a30006"/></linearGradient><linearGradient id="g125" gradientUnits="userSpaceOnUse" x1="1285" x2="1770"><stop offset=".000" stop-color="#00a5ff"/><stop offset=".239" stop-color="#008cff"/><stop offset=".333" stop-color="#707eff"/><stop offset=".428" stop-color="#ff6bfc"/><stop offset=".465" stop-color="#ff4ec8"/><stop offset=".506" stop-color="#ff379e"/><stop offset=".556" stop-color="#ff247b"/><stop offset=".613" stop-color="#ff145d"/><stop offset=".728" stop-color="#f90036"/><stop offset=".918" stop-color="#b0000e"/><stop offset="1.000" stop-color="#a30007"/></linearGradient><linearGradient id="g126" gradientUnits="userSpaceOnUse" x1="1286" x2="1762"><stop offset=".000" stop-color="#00a1ff"/><stop offset=".239" stop-color="#0087ff"/><stop offset=".340" stop-color="#7578ff"/><stop offset=".433" stop-color="#ff66ff"/><stop offset=".466" stop-color="#ff4dcf"/><stop offset=".508" stop-color="#ff36a4"/><stop offset=".559" stop-color="#ff227f"/><stop offset=".618" stop-color="#ff1260"/><stop offset=".739" stop-color="#f90037"/><stop offset=".924" stop-color="#b20010"/><stop offset="1.000" stop-color="#a30009"/></linearGradient><linearGradient id="g127" gradientUnits="userSpaceOnUse" x1="1287" x2="1755"><stop offset=".000" stop-color="#009cff"/><stop offset=".239" stop-color="#0082ff"/><stop offset=".338" stop-color="#6e73ff"/><stop offset=".440" stop-color="#ff5efc"/><stop offset=".474" stop-color="#ff47cd"/><stop offset=".517" stop-color="#ff31a3"/><stop offset=".564" stop-color="#ff2081"/><stop offset=".624" stop-color="#ff1063"/><stop offset=".752" stop-color="#f80037"/><stop offset=".872" stop-color="#cc001a"/><stop offset=".944" stop-color="#b00010"/><stop offset="1.000" stop-color="#a4000a"/></linearGradient><linearGradient id="g128" gradientUnits="userSpaceOnUse" x1="1288" x2="1747"><stop offset=".000" stop-color="#0097ff"/><stop offset=".239" stop-color="#007dff"/><stop offset=".339" stop-color="#6c6eff"/><stop offset=".448" stop-color="#ff58fb"/><stop offset=".483" stop-color="#ff41cd"/><stop offset=".526" stop-color="#ff2da3"/><stop offset=".630" stop-color="#ff0e65"/><stop offset=".709" stop-color="#ff0049"/><stop offset=".765" stop-color="#f80038"/><stop offset=".883" stop-color="#ce001c"/><stop offset="1.000" stop-color="#a7000c"/></linearGradient><linearGradient id="g129" gradientUnits="userSpaceOnUse" x1="1289" x2="1740"><stop offset=".000" stop-color="#0093ff"/><stop offset=".239" stop-color="#0079ff"/><stop offset=".350" stop-color="#7568ff"/><stop offset=".451" stop-color="#ff54ff"/><stop offset=".487" stop-color="#ff3ed0"/><stop offset=".527" stop-color="#ff2caa"/><stop offset=".575" stop-color="#ff1b87"/><stop offset=".633" stop-color="#ff0d69"/><stop offset=".708" stop-color="#ff004d"/><stop offset=".779" stop-color="#f80039"/><stop offset=".889" stop-color="#d1001e"/><stop offset="1.000" stop-color="#aa000e"/></linearGradient><linearGradient id="g130" gradientUnits="userSpaceOnUse" x1="1290" x2="1733"><stop offset=".000" stop-color="#008fff"/><stop offset=".243" stop-color="#0273ff"/><stop offset=".351" stop-color="#7363ff"/><stop offset=".459" stop-color="#ff4dfc"/><stop offset=".495" stop-color="#ff38cf"/><stop offset=".536" stop-color="#ff27a9"/><stop offset=".640" stop-color="#ff0b6b"/><stop offset=".703" stop-color="#ff0054"/><stop offset=".788" stop-color="#f8003a"/><stop offset="1.000" stop-color="#ae0010"/></linearGradient><linearGradient id="g131" gradientUnits="userSpaceOnUse" x1="1291" x2="1725"><stop offset=".000" stop-color="#008aff"/><stop offset=".240" stop-color="#0070ff"/><stop offset=".355" stop-color="#725eff"/><stop offset=".465" stop-color="#ff48ff"/><stop offset=".502" stop-color="#ff34d1"/><stop offset=".544" stop-color="#ff24ab"/><stop offset=".645" stop-color="#ff096f"/><stop offset=".700" stop-color="#ff0059"/><stop offset=".802" stop-color="#f8003b"/><stop offset="1.000" stop-color="#b30013"/></linearGradient><linearGradient id="g132" gradientUnits="userSpaceOnUse" x1="1292" x2="1718"><stop offset=".000" stop-color="#0086ff"/><stop offset=".239" stop-color="#006bff"/><stop offset=".357" stop-color="#7159ff"/><stop offset=".474" stop-color="#ff41fc"/><stop offset=".507" stop-color="#ff31d4"/><stop offset=".549" stop-color="#ff21ae"/><stop offset=".653" stop-color="#ff0771"/><stop offset=".695" stop-color="#ff0060"/><stop offset=".812" stop-color="#f9003d"/><stop offset="1.000" stop-color="#b80016"/></linearGradient><linearGradient id="g133" gradientUnits="userSpaceOnUse" x1="1293" x2="1710"><stop offset=".000" stop-color="#0082ff"/><stop offset=".244" stop-color="#0266ff"/><stop offset=".364" stop-color="#7454ff"/><stop offset=".483" stop-color="#ff3cfb"/><stop offset=".517" stop-color="#ff2cd4"/><stop offset=".560" stop-color="#ff1dae"/><stop offset=".660" stop-color="#ff0574"/><stop offset=".823" stop-color="#fa003f"/><stop offset="1.000" stop-color="#bf0019"/></linearGradient><linearGradient id="g134" gradientUnits="userSpaceOnUse" x1="1294" x2="1703"><stop offset=".000" stop-color="#007eff"/><stop offset=".244" stop-color="#0262ff"/><stop offset=".371" stop-color="#774fff"/><stop offset=".488" stop-color="#ff38ff"/><stop offset=".522" stop-color="#ff29d7"/><stop offset=".566" stop-color="#ff1ab1"/><stop offset=".663" stop-color="#ff0478"/><stop offset=".829" stop-color="#fb0042"/><stop offset="1.000" stop-color="#c5001c"/></linearGradient><linearGradient id="g135" gradientUnits="userSpaceOnUse" x1="1295" x2="1695"><stop offset=".000" stop-color="#007aff"/><stop offset=".240" stop-color="#005fff"/><stop offset=".365" stop-color="#6d4cff"/><stop offset=".500" stop-color="#ff31fa"/><stop offset=".575" stop-color="#ff17b3"/><stop offset=".675" stop-color="#ff027a"/><stop offset=".845" stop-color="#fb0043"/><stop offset="1.000" stop-color="#cc0020"/></linearGradient><linearGradient id="g136" gradientUnits="userSpaceOnUse" x1="1296" x2="1688"><stop offset=".000" stop-color="#0076ff"/><stop offset=".240" stop-color="#005bff"/><stop offset=".378" stop-color="#7546ff"/><stop offset=".505" stop-color="#ff2dfe"/><stop offset=".582" stop-color="#ff14b6"/><stop offset=".679" stop-color="#ff007e"/><stop offset=".852" stop-color="#fc0046"/><stop offset="1.000" stop-color="#d20024"/></linearGradient><linearGradient id="g137" gradientUnits="userSpaceOnUse" x1="1298" x2="1680"><stop offset=".000" stop-color="#0071ff"/><stop offset=".241" stop-color="#0156ff"/><stop offset=".382" stop-color="#7641ff"/><stop offset=".513" stop-color="#ff29ff"/><stop offset=".586" stop-color="#ff12ba"/><stop offset=".686" stop-color="#ff0082"/><stop offset=".864" stop-color="#fd0048"/><stop offset="1.000" stop-color="#da0029"/></linearGradient><linearGradient id="g138" gradientUnits="userSpaceOnUse" x1="1299" x2="1673"><stop offset=".000" stop-color="#006dff"/><stop offset=".241" stop-color="#0153ff"/><stop offset=".385" stop-color="#743dff"/><stop offset=".524" stop-color="#ff23fc"/><stop offset=".599" stop-color="#ff0db9"/><stop offset=".695" stop-color="#ff0084"/><stop offset=".877" stop-color="#fd004a"/><stop offset="1.000" stop-color="#e0002d"/></linearGradient><linearGradient id="g139" gradientUnits="userSpaceOnUse" x1="1300" x2="1666"><stop offset=".000" stop-color="#0069ff"/><stop offset=".240" stop-color="#014fff"/><stop offset=".393" stop-color="#7839ff"/><stop offset=".530" stop-color="#fe1fff"/><stop offset=".607" stop-color="#ff0bbc"/><stop offset=".705" stop-color="#ff0086"/><stop offset=".885" stop-color="#fe004d"/><stop offset="1.000" stop-color="#e60032"/></linearGradient><linearGradient id="g140" gradientUnits="userSpaceOnUse" x1="1301" x2="1658"><stop offset=".000" stop-color="#0066ff"/><stop offset=".240" stop-color="#004bff"/><stop offset=".397" stop-color="#7535ff"/><stop offset=".542" stop-color="#ff1bff"/><stop offset=".620" stop-color="#ff07bc"/><stop offset=".715" stop-color="#ff0089"/><stop offset=".899" stop-color="#fe004f"/><stop offset="1.000" stop-color="#ec0038"/></linearGradient><linearGradient id="g141" gradientUnits="userSpaceOnUse" x1="1303" x2="1651"><stop offset=".000" stop-color="#0061ff"/><stop offset=".241" stop-color="#0347ff"/><stop offset=".402" stop-color="#7731ff"/><stop offset=".552" stop-color="#ff16fe"/><stop offset=".626" stop-color="#ff04c0"/><stop offset=".724" stop-color="#ff008c"/><stop offset=".914" stop-color="#fe0051"/><stop offset="1.000" stop-color="#f1003d"/></linearGradient><linearGradient id="g142" gradientUnits="userSpaceOnUse" x1="1304" x2="1643"><stop offset=".000" stop-color="#005eff"/><stop offset=".241" stop-color="#0244ff"/><stop offset=".406" stop-color="#752dff"/><stop offset=".565" stop-color="#ff11fd"/><stop offset=".641" stop-color="#ff01c0"/><stop offset=".735" stop-color="#ff008f"/><stop offset=".841" stop-color="#ff006a"/><stop offset="1.000" stop-color="#f60043"/></linearGradient><linearGradient id="g143" gradientUnits="userSpaceOnUse" x1="1305" x2="1636"><stop offset=".000" stop-color="#005aff"/><stop offset=".241" stop-color="#0240ff"/><stop offset=".416" stop-color="#7829ff"/><stop offset=".572" stop-color="#fe0eff"/><stop offset=".651" stop-color="#ff00c3"/><stop offset=".741" stop-color="#ff0094"/><stop offset=".849" stop-color="#ff006d"/><stop offset="1.000" stop-color="#fa0049"/></linearGradient><linearGradient id="g144" gradientUnits="userSpaceOnUse" x1="1307" x2="1628"><stop offset=".000" stop-color="#0056ff"/><stop offset=".236" stop-color="#003eff"/><stop offset=".410" stop-color="#7027ff"/><stop offset=".590" stop-color="#ff08fb"/><stop offset=".665" stop-color="#ff00c4"/><stop offset=".758" stop-color="#ff0095"/><stop offset=".863" stop-color="#ff0070"/><stop offset="1.000" stop-color="#fd004f"/></linearGradient><linearGradient id="g145" gradientUnits="userSpaceOnUse" x1="1308" x2="1621"><stop offset=".000" stop-color="#0052ff"/><stop offset=".236" stop-color="#003aff"/><stop offset=".427" stop-color="#7821ff"/><stop offset=".599" stop-color="#ff05fe"/><stop offset=".675" stop-color="#ff00c6"/><stop offset=".764" stop-color="#ff0099"/><stop offset=".873" stop-color="#ff0074"/><stop offset="1.000" stop-color="#fe0055"/></linearGradient><linearGradient id="g146" gradientUnits="userSpaceOnUse" x1="1309" x2="1614"><stop offset=".000" stop-color="#004fff"/><stop offset=".235" stop-color="#0037ff"/><stop offset=".431" stop-color="#761eff"/><stop offset=".608" stop-color="#fc02ff"/><stop offset=".686" stop-color="#ff00c9"/><stop offset=".771" stop-color="#ff009f"/><stop offset=".876" stop-color="#ff007a"/><stop offset="1.000" stop-color="#ff005b"/></linearGradient><linearGradient id="g147" gradientUnits="userSpaceOnUse" x1="1311" x2="1606"><stop offset=".000" stop-color="#004bff"/><stop offset=".236" stop-color="#0233ff"/><stop offset=".439" stop-color="#771aff"/><stop offset=".622" stop-color="#fc00ff"/><stop offset=".703" stop-color="#ff00ca"/><stop offset=".784" stop-color="#ff00a2"/><stop offset=".885" stop-color="#ff007e"/><stop offset="1.000" stop-color="#ff0061"/></linearGradient><linearGradient id="g148" gradientUnits="userSpaceOnUse" x1="1312" x2="1599"><stop offset=".000" stop-color="#0047ff"/><stop offset=".236" stop-color="#0230ff"/><stop offset=".451" stop-color="#7a16ff"/><stop offset=".639" stop-color="#fe00ff"/><stop offset=".715" stop-color="#ff00cd"/><stop offset=".792" stop-color="#ff00a7"/><stop offset=".889" stop-color="#ff0085"/><stop offset="1.000" stop-color="#ff0068"/></linearGradient><linearGradient id="g149" gradientUnits="userSpaceOnUse" x1="1314" x2="1591"><stop offset=".000" stop-color="#0043ff"/><stop offset=".230" stop-color="#002eff"/><stop offset=".453" stop-color="#7614ff"/><stop offset=".590" stop-color="#cf00ff"/><stop offset=".655" stop-color="#fd00ff"/><stop offset=".727" stop-color="#ff00d2"/><stop offset=".806" stop-color="#ff00ab"/><stop offset="1.000" stop-color="#ff006f"/></linearGradient><linearGradient id="g150" gradientUnits="userSpaceOnUse" x1="1315" x2="1584"><stop offset=".000" stop-color="#0040ff"/><stop offset=".230" stop-color="#002bff"/><stop offset=".459" stop-color="#7510ff"/><stop offset=".578" stop-color="#bd00ff"/><stop offset=".674" stop-color="#ff00fe"/><stop offset=".741" stop-color="#ff00d4"/><stop offset=".815" stop-color="#ff00b1"/><stop offset="1.000" stop-color="#ff0076"/></linearGradient><linearGradient id="g151" gradientUnits="userSpaceOnUse" x1="1317" x2="1576"><stop offset=".000" stop-color="#003cff"/><stop offset=".231" stop-color="#0228ff"/><stop offset=".477" stop-color="#7a0cff"/><stop offset=".569" stop-color="#af00ff"/><stop offset=".692" stop-color="#ff00ff"/><stop offset=".823" stop-color="#ff00b8"/><stop offset="1.000" stop-color="#ff007e"/></linearGradient><linearGradient id="g152" gradientUnits="userSpaceOnUse" x1="1318" x2="1569"><stop offset=".000" stop-color="#0039ff"/><stop offset=".230" stop-color="#0225ff"/><stop offset=".484" stop-color="#7909ff"/><stop offset=".556" stop-color="#a000ff"/><stop offset=".706" stop-color="#fc00ff"/><stop offset=".841" stop-color="#ff00ba"/><stop offset="1.000" stop-color="#ff0086"/></linearGradient><linearGradient id="g153" gradientUnits="userSpaceOnUse" x1="1320" x2="1561"><stop offset=".000" stop-color="#0035ff"/><stop offset=".223" stop-color="#0022ff"/><stop offset=".488" stop-color="#7507ff"/><stop offset=".545" stop-color="#9300ff"/><stop offset=".727" stop-color="#fc00ff"/><stop offset=".860" stop-color="#ff00bf"/><stop offset="1.000" stop-color="#ff0090"/></linearGradient><linearGradient id="g154" gradientUnits="userSpaceOnUse" x1="1321" x2="1554"><stop offset=".000" stop-color="#0032ff"/><stop offset=".222" stop-color="#001fff"/><stop offset=".504" stop-color="#7803ff"/><stop offset=".752" stop-color="#fe00ff"/><stop offset=".872" stop-color="#ff00c5"/><stop offset="1.000" stop-color="#ff0099"/></linearGradient><linearGradient id="g155" gradientUnits="userSpaceOnUse" x1="1323" x2="1547"><stop offset=".000" stop-color="#002eff"/><stop offset=".223" stop-color="#021cff"/><stop offset=".518" stop-color="#7a00ff"/><stop offset=".777" stop-color="#ff00ff"/><stop offset=".875" stop-color="#ff00cf"/><stop offset="1.000" stop-color="#ff00a3"/></linearGradient><linearGradient id="g156" gradientUnits="userSpaceOnUse" x1="1325" x2="1539"><stop offset=".000" stop-color="#002bff"/><stop offset=".215" stop-color="#011aff"/><stop offset=".523" stop-color="#7700ff"/><stop offset=".804" stop-color="#ff00ff"/><stop offset=".897" stop-color="#ff00d3"/><stop offset="1.000" stop-color="#ff00af"/></linearGradient><linearGradient id="g157" gradientUnits="userSpaceOnUse" x1="1327" x2="1532"><stop offset=".000" stop-color="#0027ff"/><stop offset=".214" stop-color="#0217ff"/><stop offset=".534" stop-color="#7600ff"/><stop offset=".825" stop-color="#fc00ff"/><stop offset="1.000" stop-color="#ff00ba"/></linearGradient><linearGradient id="g158" gradientUnits="userSpaceOnUse" x1="1329" x2="1524"><stop offset=".000" stop-color="#0023ff"/><stop offset=".204" stop-color="#0015ff"/><stop offset=".459" stop-color="#5500ff"/><stop offset=".551" stop-color="#7700ff"/><stop offset=".857" stop-color="#fc00ff"/><stop offset="1.000" stop-color="#ff00c8"/></linearGradient><linearGradient id="g159" gradientUnits="userSpaceOnUse" x1="1330" x2="1517"><stop offset=".000" stop-color="#0020ff"/><stop offset=".202" stop-color="#0013ff"/><stop offset=".436" stop-color="#4900ff"/><stop offset=".564" stop-color="#7600ff"/><stop offset=".894" stop-color="#fe00ff"/><stop offset="1.000" stop-color="#ff00d5"/></linearGradient><linearGradient id="g160" gradientUnits="userSpaceOnUse" x1="1332" x2="1509"><stop offset=".000" stop-color="#001dff"/><stop offset=".202" stop-color="#0210ff"/><stop offset=".416" stop-color="#4000ff"/><stop offset=".584" stop-color="#7700ff"/><stop offset=".933" stop-color="#fd00ff"/><stop offset="1.000" stop-color="#ff00e5"/></linearGradient><linearGradient id="g161" gradientUnits="userSpaceOnUse" x1="1334" x2="1502"><stop offset=".000" stop-color="#0019ff"/><stop offset=".190" stop-color="#010eff"/><stop offset=".381" stop-color="#3400ff"/><stop offset=".560" stop-color="#6900ff"/><stop offset=".976" stop-color="#ff00ff"/><stop offset="1.000" stop-color="#ff00f5"/></linearGradient><linearGradient id="g162" gradientUnits="userSpaceOnUse" x1="1336" x2="1494"><stop offset=".000" stop-color="#0016ff"/><stop offset=".177" stop-color="#000cff"/><stop offset=".241" stop-color="#0e08ff"/><stop offset=".354" stop-color="#2b00ff"/><stop offset=".646" stop-color="#7d00ff"/><stop offset="1.000" stop-color="#f500ff"/></linearGradient><linearGradient id="g163" gradientUnits="userSpaceOnUse" x1="1338" x2="1487"><stop offset=".000" stop-color="#0013ff"/><stop offset=".173" stop-color="#0009ff"/><stop offset=".227" stop-color="#0c06ff"/><stop offset=".627" stop-color="#7100ff"/><stop offset="1.000" stop-color="#e500ff"/></linearGradient><linearGradient id="g164" gradientUnits="userSpaceOnUse" x1="1340" x2="1480"><stop offset=".000" stop-color="#000fff"/><stop offset=".157" stop-color="#0007ff"/><stop offset=".214" stop-color="#0b04ff"/><stop offset=".629" stop-color="#6c00ff"/><stop offset="1.000" stop-color="#d500ff"/></linearGradient><linearGradient id="g165" gradientUnits="userSpaceOnUse" x1="1342" x2="1472"><stop offset=".000" stop-color="#000cff"/><stop offset=".154" stop-color="#0104ff"/><stop offset=".215" stop-color="#0d01ff"/><stop offset=".631" stop-color="#6500ff"/><stop offset="1.000" stop-color="#c300ff"/></linearGradient><linearGradient id="g166" gradientUnits="userSpaceOnUse" x1="1344" x2="1465"><stop offset=".000" stop-color="#0009ff"/><stop offset=".131" stop-color="#0003ff"/><stop offset=".213" stop-color="#0e00ff"/><stop offset=".623" stop-color="#5e00ff"/><stop offset="1.000" stop-color="#b500ff"/></linearGradient><linearGradient id="g167" gradientUnits="userSpaceOnUse" x1="1346" x2="1457"><stop offset=".000" stop-color="#0005ff"/><stop offset=".125" stop-color="#0000ff"/><stop offset=".214" stop-color="#0f00ff"/><stop offset=".625" stop-color="#5800ff"/><stop offset="1.000" stop-color="#a500ff"/></linearGradient><linearGradient id="g168" gradientUnits="userSpaceOnUse" x1="1349" x2="1450"><stop offset=".000" stop-color="#0002ff"/><stop offset=".098" stop-color="#0000ff"/><stop offset=".255" stop-color="#1800ff"/><stop offset="1.000" stop-color="#9800ff"/></linearGradient><linearGradient id="g169" gradientUnits="userSpaceOnUse" x1="1351" x2="1442"><stop offset=".000" stop-color="#0000ff"/><stop offset=".087" stop-color="#0200ff"/><stop offset=".283" stop-color="#1c00ff"/><stop offset="1.000" stop-color="#8900ff"/></linearGradient><linearGradient id="g170" gradientUnits="userSpaceOnUse" x1="1353" x2="1435"><stop offset=".000" stop-color="#0000ff"/><stop offset=".366" stop-color="#2700ff"/><stop offset="1.000" stop-color="#7d00ff"/></linearGradient><linearGradient id="g171" gradientUnits="userSpaceOnUse" x1="1356" x2="1428"><stop offset=".000" stop-color="#0100ff"/><stop offset="1.000" stop-color="#7100ff"/></linearGradient><linearGradient id="g172" gradientUnits="userSpaceOnUse" x1="1358" x2="1420"><stop offset=".000" stop-color="#0500ff"/><stop offset="1.000" stop-color="#6400ff"/></linearGradient><linearGradient id="g173" gradientUnits="userSpaceOnUse" x1="1361" x2="1413"><stop offset=".000" stop-color="#0a00ff"/><stop offset="1.000" stop-color="#5900ff"/></linearGradient><linearGradient id="g174" gradientUnits="userSpaceOnUse" x1="1363" x2="1405"><stop offset=".000" stop-color="#0e00ff"/><stop offset="1.000" stop-color="#4d00ff"/></linearGradient><linearGradient id="g175" gradientUnits="userSpaceOnUse" x1="1366" x2="1398"><stop offset=".000" stop-color="#1400ff"/><stop offset="1.000" stop-color="#4300ff"/></linearGradient><linearGradient id="g176" gradientUnits="userSpaceOnUse" x1="1368" x2="1390"><stop offset=".000" stop-color="#1800ff"/><stop offset="1.000" stop-color="#3800ff"/></linearGradient><linearGradient id="g177" gradientUnits="userSpaceOnUse" x1="1372" x2="1383"><stop offset=".000" stop-color="#1f00ff"/><stop offset="1.000" stop-color="#2f00ff"/></linearGradient><linearGradient id="i0" gradientUnits="userSpaceOnUse" x1="1671" x2="1905"><stop offset=".000" stop-color="#87ffcf"/><stop offset=".782" stop-color="#feffca"/><stop offset="1.000" stop-color="#ffdeaf"/></linearGradient><linearGradient id="i1" gradientUnits="userSpaceOnUse" x1="1671" x2="1905"><stop offset=".000" stop-color="#89ffd2"/><stop offset=".769" stop-color="#fffecd"/><stop offset="1.000" stop-color="#ffdbaf"/></linearGradient><linearGradient id="i2" gradientUnits="userSpaceOnUse" x1="1671" x2="1905"><stop offset=".000" stop-color="#8bffd5"/><stop offset=".744" stop-color="#ffffd1"/><stop offset="1.000" stop-color="#ffd8b0"/></linearGradient><linearGradient id="i3" gradientUnits="userSpaceOnUse" x1="1671" x2="1905"><stop offset=".000" stop-color="#8effd8"/><stop offset=".718" stop-color="#feffd5"/><stop offset="1.000" stop-color="#ffd5b0"/></linearGradient><linearGradient id="i4" gradientUnits="userSpaceOnUse" x1="1671" x2="1905"><stop offset=".000" stop-color="#90ffdc"/><stop offset=".705" stop-color="#ffffd8"/><stop offset="1.000" stop-color="#ffd2b1"/></linearGradient><linearGradient id="i5" gradientUnits="userSpaceOnUse" x1="1671" x2="1905"><stop offset=".000" stop-color="#92ffdf"/><stop offset=".679" stop-color="#feffdc"/><stop offset="1.000" stop-color="#ffd0b2"/></linearGradient><linearGradient id="i6" gradientUnits="userSpaceOnUse" x1="1671" x2="1905"><stop offset=".000" stop-color="#95ffe2"/><stop offset=".654" stop-color="#feffe0"/><stop offset="1.000" stop-color="#ffcdb2"/></linearGradient><linearGradient id="i7" gradientUnits="userSpaceOnUse" x1="1671" x2="1905"><stop offset=".000" stop-color="#97ffe6"/><stop offset=".641" stop-color="#ffffe3"/><stop offset="1.000" stop-color="#ffcab3"/></linearGradient><linearGradient id="i8" gradientUnits="userSpaceOnUse" x1="1671" x2="1905"><stop offset=".000" stop-color="#9affe9"/><stop offset=".615" stop-color="#feffe7"/><stop offset="1.000" stop-color="#ffc7b3"/></linearGradient><linearGradient id="i9" gradientUnits="userSpaceOnUse" x1="1671" x2="1905"><stop offset=".000" stop-color="#9cffed"/><stop offset=".603" stop-color="#fffeeb"/><stop offset="1.000" stop-color="#ffc4b4"/></linearGradient><linearGradient id="i10" gradientUnits="userSpaceOnUse" x1="1671" x2="1905"><stop offset=".000" stop-color="#9ffff0"/><stop offset=".577" stop-color="#ffffef"/><stop offset="1.000" stop-color="#ffc1b5"/></linearGradient><linearGradient id="i11" gradientUnits="userSpaceOnUse" x1="1671" x2="1905"><stop offset=".000" stop-color="#a2fff4"/><stop offset=".551" stop-color="#fefff3"/><stop offset="1.000" stop-color="#ffbfb5"/></linearGradient><linearGradient id="i12" gradientUnits="userSpaceOnUse" x1="1671" x2="1905"><stop offset=".000" stop-color="#a4fff8"/><stop offset=".538" stop-color="#fffff7"/><stop offset="1.000" stop-color="#ffbcb6"/></linearGradient><linearGradient id="i13" gradientUnits="userSpaceOnUse" x1="1671" x2="1905"><stop offset=".000" stop-color="#a7fffb"/><stop offset=".513" stop-color="#fffffb"/><stop offset=".744" stop-color="#ffdad6"/><stop offset="1.000" stop-color="#ffb9b6"/></linearGradient><linearGradient id="i14" gradientUnits="userSpaceOnUse" x1="1671" x2="1905"><stop offset=".000" stop-color="#aaffff"/><stop offset=".500" stop-color="#fffefe"/><stop offset=".731" stop-color="#ffd8d9"/><stop offset="1.000" stop-color="#ffb6b7"/></linearGradient><linearGradient id="i15" gradientUnits="userSpaceOnUse" x1="1671" x2="1905"><stop offset=".000" stop-color="#aafbff"/><stop offset=".500" stop-color="#fffaff"/><stop offset=".731" stop-color="#ffd5d9"/><stop offset="1.000" stop-color="#ffb4b7"/></linearGradient><linearGradient id="i16" gradientUnits="userSpaceOnUse" x1="1671" x2="1905"><stop offset=".000" stop-color="#aaf7ff"/><stop offset=".500" stop-color="#fff6ff"/><stop offset=".731" stop-color="#ffd2da"/><stop offset="1.000" stop-color="#ffb1b8"/></linearGradient><linearGradient id="i17" gradientUnits="userSpaceOnUse" x1="1671" x2="1905"><stop offset=".000" stop-color="#abf3ff"/><stop offset=".500" stop-color="#fff2ff"/><stop offset=".744" stop-color="#ffcdd8"/><stop offset="1.000" stop-color="#ffaeb8"/></linearGradient><linearGradient id="i18" gradientUnits="userSpaceOnUse" x1="1671" x2="1905"><stop offset=".000" stop-color="#abf0ff"/><stop offset=".500" stop-color="#ffeeff"/><stop offset=".744" stop-color="#ffcad9"/><stop offset="1.000" stop-color="#ffacb9"/></linearGradient><linearGradient id="i19" gradientUnits="userSpaceOnUse" x1="1671" x2="1905"><stop offset=".000" stop-color="#abecff"/><stop offset=".500" stop-color="#feebff"/><stop offset="1.000" stop-color="#ffa9b9"/></linearGradient><linearGradient id="i20" gradientUnits="userSpaceOnUse" x1="1671" x2="1905"><stop offset=".000" stop-color="#abe9ff"/><stop offset=".500" stop-color="#fee7ff"/><stop offset="1.000" stop-color="#ffa7ba"/></linearGradient><linearGradient id="i21" gradientUnits="userSpaceOnUse" x1="1671" x2="1905"><stop offset=".000" stop-color="#abe5ff"/><stop offset=".513" stop-color="#ffe2fe"/><stop offset="1.000" stop-color="#ffa4ba"/></linearGradient><linearGradient id="i22" gradientUnits="userSpaceOnUse" x1="1671" x2="1905"><stop offset=".000" stop-color="#ace1ff"/><stop offset=".513" stop-color="#ffdefe"/><stop offset="1.000" stop-color="#ffa2bb"/></linearGradient><linearGradient id="i23" gradientUnits="userSpaceOnUse" x1="1671" x2="1905"><stop offset=".000" stop-color="#acdeff"/><stop offset=".513" stop-color="#ffdbff"/><stop offset="1.000" stop-color="#ff9fbb"/></linearGradient><linearGradient id="i24" gradientUnits="userSpaceOnUse" x1="1671" x2="1905"><stop offset=".000" stop-color="#acdaff"/><stop offset=".513" stop-color="#ffd8ff"/><stop offset="1.000" stop-color="#ff9dbc"/></linearGradient><linearGradient id="i25" gradientUnits="userSpaceOnUse" x1="1671" x2="1905"><stop offset=".000" stop-color="#acd7ff"/><stop offset=".513" stop-color="#ffd4ff"/><stop offset="1.000" stop-color="#ff9abc"/></linearGradient><linearGradient id="i26" gradientUnits="userSpaceOnUse" x1="1671" x2="1905"><stop offset=".000" stop-color="#add4ff"/><stop offset=".513" stop-color="#ffd0ff"/><stop offset="1.000" stop-color="#ff98bd"/></linearGradient><linearGradient id="i27" gradientUnits="userSpaceOnUse" x1="1671" x2="1905"><stop offset=".000" stop-color="#add0ff"/><stop offset=".513" stop-color="#fecdff"/><stop offset="1.000" stop-color="#ff95bd"/></linearGradient><linearGradient id="i28" gradientUnits="userSpaceOnUse" x1="1671" x2="1905"><stop offset=".000" stop-color="#adcdff"/><stop offset=".513" stop-color="#fec9ff"/><stop offset="1.000" stop-color="#ff93be"/></linearGradient><filter id="vb" x="-2%" y="-2%" width="104%" height="104%"><feGaussianBlur stdDeviation="0 1.6"/></filter><clipPath id="hs"><path d="M1374.8 684.0 L1371.9 682.4 L1369.3 679.6 L1366.8 676.5 L1364.2 673.4 L1361.7 670.3 L1359.2 667.2 L1356.7 664.1 L1354.2 661.0 L1351.7 657.9 L1349.2 654.7 L1346.7 651.6 L1344.3 648.4 L1342.0 645.1 L1339.8 641.8 L1337.7 638.4 L1335.6 635.0 L1333.5 631.6 L1331.4 628.2 L1329.3 624.8 L1327.2 621.4 L1325.2 617.9 L1323.2 614.4 L1321.3 611.0 L1319.4 607.4 L1317.6 603.9 L1315.8 600.3 L1314.0 596.7 L1312.3 593.1 L1310.6 589.5 L1308.9 585.9 L1307.3 582.2 L1305.6 578.6 L1304.0 574.9 L1302.5 571.3 L1300.9 567.6 L1299.4 563.9 L1297.9 560.2 L1296.5 556.4 L1295.1 552.7 L1293.7 548.9 L1292.3 545.2 L1291.0 541.4 L1289.7 537.6 L1288.4 533.8 L1287.1 530.1 L1285.8 526.3 L1284.5 522.5 L1283.3 518.7 L1282.0 514.9 L1280.8 511.1 L1279.6 507.3 L1278.5 503.4 L1277.3 499.6 L1276.3 495.7 L1275.2 491.9 L1274.2 488.0 L1273.3 484.1 L1272.4 480.2 L1271.4 476.4 L1270.5 472.5 L1269.7 468.6 L1268.8 464.7 L1267.9 460.7 L1267.0 456.8 L1266.2 452.9 L1265.3 449.0 L1264.4 445.1 L1263.6 441.2 L1262.8 437.3 L1261.9 433.4 L1261.1 429.5 L1260.4 425.5 L1259.6 421.6 L1258.9 417.7 L1258.2 413.7 L1257.6 409.8 L1256.9 405.9 L1256.3 401.9 L1255.7 398.0 L1255.1 394.0 L1254.5 390.0 L1253.9 386.1 L1253.3 382.1 L1252.8 378.2 L1252.2 374.2 L1251.6 370.2 L1251.1 366.3 L1250.5 362.3 L1249.9 358.4 L1249.4 354.4 L1248.9 350.4 L1248.4 346.5 L1248.0 342.5 L1247.6 338.5 L1247.2 334.5 L1246.9 330.6 L1246.6 326.6 L1246.3 322.6 L1246.1 318.6 L1245.8 314.6 L1245.6 310.6 L1245.5 306.6 L1245.3 302.6 L1245.1 298.6 L1244.9 294.6 L1244.8 290.6 L1244.6 286.6 L1244.5 282.6 L1244.4 278.6 L1244.3 274.6 L1244.3 270.7 L1244.4 266.7 L1244.5 262.7 L1244.7 258.7 L1244.9 254.7 L1245.3 250.8 L1245.7 246.8 L1246.1 242.8 L1246.6 238.8 L1247.1 234.9 L1247.6 230.9 L1248.2 227.0 L1248.8 223.1 L1249.5 219.1 L1250.3 215.2 L1251.2 211.4 L1252.1 207.6 L1253.2 203.8 L1254.5 200.0 L1255.9 196.4 L1257.4 192.7 L1259.0 189.2 L1260.8 185.6 L1262.6 182.2 L1264.7 178.9 L1266.8 175.7 L1269.1 172.6 L1271.5 169.7 L1274.2 167.0 L1277.0 164.5 L1280.0 162.2 L1283.1 160.1 L1286.4 158.3 L1289.9 156.8 L1293.4 155.5 L1297.0 154.5 L1300.7 153.8 L1304.4 153.4 L1308.2 153.2 L1312.0 153.3 L1315.9 153.6 L1319.7 154.1 L1323.6 154.8 L1327.4 155.6 L1331.2 156.6 L1335.0 157.7 L1338.8 158.9 L1342.6 160.3 L1346.3 161.7 L1350.0 163.1 L1353.7 164.6 L1357.3 166.2 L1361.0 167.8 L1364.6 169.5 L1368.3 171.1 L1371.9 172.8 L1375.5 174.6 L1379.1 176.3 L1382.7 178.1 L1386.2 179.9 L1389.8 181.8 L1393.3 183.6 L1396.9 185.5 L1400.4 187.4 L1403.9 189.3 L1407.4 191.3 L1410.8 193.3 L1414.3 195.3 L1417.8 197.3 L1421.2 199.3 L1424.6 201.4 L1428.0 203.5 L1431.4 205.6 L1434.8 207.7 L1438.2 209.8 L1441.6 212.0 L1444.9 214.2 L1448.3 216.4 L1451.6 218.6 L1454.9 220.8 L1458.3 223.0 L1461.6 225.3 L1464.9 227.5 L1468.2 229.8 L1471.4 232.1 L1474.7 234.4 L1478.0 236.7 L1481.2 239.1 L1484.5 241.4 L1487.7 243.7 L1491.0 246.1 L1494.2 248.4 L1497.4 250.8 L1500.6 253.2 L1503.8 255.6 L1507.0 258.0 L1510.2 260.4 L1513.4 262.8 L1516.6 265.2 L1519.8 267.6 L1523.0 270.1 L1526.1 272.5 L1529.3 275.0 L1532.5 277.4 L1535.6 279.9 L1538.8 282.4 L1541.9 284.8 L1545.0 287.3 L1548.2 289.8 L1551.3 292.3 L1554.4 294.8 L1557.5 297.3 L1560.6 299.9 L1563.7 302.4 L1566.8 304.9 L1569.9 307.4 L1573.0 310.0 L1576.1 312.5 L1579.2 315.0 L1582.3 317.6 L1585.4 320.1 L1588.5 322.7 L1591.6 325.2 L1594.7 327.7 L1597.8 330.3 L1600.8 332.8 L1603.9 335.4 L1607.0 338.0 L1610.1 340.5 L1613.2 343.1 L1616.2 345.6 L1619.3 348.2 L1622.4 350.7 L1625.5 353.3 L1628.6 355.8 L1631.6 358.4 L1634.7 361.0 L1637.8 363.5 L1640.9 366.1 L1643.9 368.6 L1647.0 371.2 L1650.1 373.7 L1653.2 376.3 L1656.2 378.9 L1659.3 381.4 L1662.4 384.0 L1665.5 386.5 L1668.6 389.1 L1671.6 391.6 L1674.7 394.2 L1677.8 396.8 L1680.9 399.3 L1683.9 401.9 L1687.0 404.4 L1690.1 407.0 L1693.2 409.5 L1696.3 412.1 L1699.3 414.6 L1702.4 417.2 L1705.5 419.8 L1708.6 422.3 L1711.6 424.9 L1714.7 427.4 L1717.8 430.0 L1720.9 432.6 L1723.9 435.1 L1727.0 437.7 L1730.1 440.2 L1733.2 442.8 L1736.3 445.3 L1739.3 447.9 L1742.4 450.5 L1745.5 453.0 L1748.6 455.6 L1751.7 458.1 L1754.7 460.7 L1757.8 463.2 L1760.9 465.8 L1764.0 468.3 L1767.1 470.9 L1770.1 473.4 L1773.2 476.0 L1776.3 478.5 L1779.4 481.1 L1782.4 483.7 L1785.5 486.2 L1788.6 488.8 L1791.7 491.3 L1794.8 493.9 L1797.8 496.4 L1800.9 499.0 L1804.0 501.6 L1807.0 504.1 L1809.7 506.4 L1810.9 508.4 L1809.7 510.0 L1806.6 511.5 L1802.9 513.0 L1799.2 514.5 L1795.5 516.0 L1791.8 517.5 L1788.1 519.0 L1784.4 520.5 L1780.7 522.0 L1777.0 523.5 L1773.2 525.0 L1769.5 526.5 L1765.8 528.0 L1762.1 529.5 L1758.4 531.0 L1754.7 532.5 L1751.0 534.0 L1747.3 535.5 L1743.6 537.0 L1739.8 538.5 L1736.1 540.0 L1732.4 541.4 L1728.7 542.9 L1725.0 544.4 L1721.3 545.9 L1717.6 547.4 L1713.9 548.9 L1710.2 550.4 L1706.5 551.9 L1702.7 553.4 L1699.0 554.9 L1695.3 556.4 L1691.6 557.9 L1687.9 559.4 L1684.2 560.9 L1680.5 562.4 L1676.8 563.9 L1673.1 565.4 L1669.3 566.9 L1665.6 568.4 L1661.9 569.9 L1658.2 571.4 L1654.5 572.9 L1650.8 574.4 L1647.1 575.9 L1643.4 577.4 L1639.7 578.9 L1635.9 580.4 L1632.2 581.8 L1628.5 583.3 L1624.8 584.8 L1621.1 586.3 L1617.4 587.8 L1613.7 589.3 L1610.0 590.8 L1606.3 592.3 L1602.5 593.8 L1598.8 595.3 L1595.1 596.8 L1591.4 598.3 L1587.7 599.8 L1584.0 601.3 L1580.3 602.8 L1576.6 604.3 L1572.9 605.8 L1569.2 607.3 L1565.4 608.8 L1561.7 610.3 L1558.0 611.8 L1554.3 613.3 L1550.6 614.8 L1546.9 616.3 L1543.2 617.8 L1539.5 619.3 L1535.8 620.8 L1532.0 622.3 L1528.3 623.7 L1524.6 625.2 L1520.9 626.7 L1517.2 628.2 L1513.5 629.7 L1509.8 631.2 L1506.1 632.7 L1502.4 634.2 L1498.6 635.7 L1494.9 637.2 L1491.2 638.7 L1487.5 640.2 L1483.8 641.7 L1480.1 643.2 L1476.4 644.7 L1472.7 646.2 L1469.0 647.7 L1465.3 649.2 L1461.5 650.7 L1457.8 652.2 L1454.1 653.7 L1450.4 655.2 L1446.7 656.7 L1443.0 658.2 L1439.3 659.7 L1435.6 661.2 L1431.9 662.7 L1428.1 664.1 L1424.4 665.6 L1420.7 667.1 L1417.0 668.6 L1413.3 670.1 L1409.6 671.6 L1405.9 673.1 L1402.2 674.6 L1398.5 676.1 L1394.7 677.6 L1391.0 679.1 L1387.3 680.6 L1383.6 682.1 L1379.9 683.5 L1376.4 684.2Z"/></clipPath></defs>
<g clip-path="url(#hs)"><g filter="url(#vb)" shape-rendering="crispEdges"><rect x="1294" y="152" width="32" height="3" fill="url(#g0)"/><rect x="1286" y="155" width="51" height="3" fill="url(#g1)"/><rect x="1280" y="158" width="66" height="3" fill="url(#g2)"/><rect x="1276" y="161" width="78" height="3" fill="url(#g3)"/><rect x="1273" y="164" width="88" height="3" fill="url(#g4)"/><rect x="1270" y="167" width="97" height="3" fill="url(#g5)"/><rect x="1267" y="170" width="107" height="3" fill="url(#g6)"/><rect x="1265" y="173" width="115" height="3" fill="url(#g7)"/><rect x="1263" y="176" width="123" height="3" fill="url(#g8)"/><rect x="1261" y="179" width="131" height="3" fill="url(#g9)"/><rect x="1260" y="182" width="137" height="3" fill="url(#g10)"/><rect x="1258" y="185" width="145" height="3" fill="url(#g11)"/><rect x="1257" y="188" width="151" height="3" fill="url(#g12)"/><rect x="1255" y="191" width="159" height="3" fill="url(#g13)"/><rect x="1254" y="194" width="165" height="3" fill="url(#g14)"/><rect x="1253" y="197" width="171" height="3" fill="url(#g15)"/><rect x="1252" y="200" width="177" height="3" fill="url(#g16)"/><rect x="1251" y="203" width="183" height="3" fill="url(#g17)"/><rect x="1250" y="206" width="188" height="3" fill="url(#g18)"/><rect x="1250" y="209" width="193" height="3" fill="url(#g19)"/><rect x="1249" y="212" width="199" height="3" fill="url(#g20)"/><rect x="1248" y="215" width="204" height="3" fill="url(#g21)"/><rect x="1248" y="218" width="209" height="3" fill="url(#g22)"/><rect x="1247" y="221" width="214" height="3" fill="url(#g23)"/><rect x="1247" y="224" width="219" height="3" fill="url(#g24)"/><rect x="1246" y="227" width="224" height="3" fill="url(#g25)"/><rect x="1246" y="230" width="228" height="3" fill="url(#g26)"/><rect x="1245" y="233" width="233" height="3" fill="url(#g27)"/><rect x="1245" y="236" width="238" height="3" fill="url(#g28)"/><rect x="1245" y="239" width="242" height="3" fill="url(#g29)"/><rect x="1244" y="242" width="247" height="3" fill="url(#g30)"/><rect x="1244" y="245" width="251" height="3" fill="url(#g31)"/><rect x="1244" y="248" width="255" height="3" fill="url(#g32)"/><rect x="1244" y="251" width="259" height="3" fill="url(#g33)"/><rect x="1243" y="254" width="264" height="3" fill="url(#g34)"/><rect x="1243" y="257" width="268" height="3" fill="url(#g35)"/><rect x="1243" y="260" width="272" height="3" fill="url(#g36)"/><rect x="1243" y="263" width="276" height="3" fill="url(#g37)"/><rect x="1243" y="266" width="280" height="3" fill="url(#g38)"/><rect x="1243" y="269" width="284" height="3" fill="url(#g39)"/><rect x="1243" y="272" width="288" height="3" fill="url(#g40)"/><rect x="1243" y="275" width="292" height="3" fill="url(#g41)"/><rect x="1243" y="278" width="296" height="3" fill="url(#g42)"/><rect x="1243" y="281" width="299" height="3" fill="url(#g43)"/><rect x="1243" y="284" width="303" height="3" fill="url(#g44)"/><rect x="1243" y="287" width="307" height="3" fill="url(#g45)"/><rect x="1243" y="290" width="311" height="3" fill="url(#g46)"/><rect x="1243" y="293" width="314" height="3" fill="url(#g47)"/><rect x="1243" y="296" width="318" height="3" fill="url(#g48)"/><rect x="1244" y="299" width="321" height="3" fill="url(#g49)"/><rect x="1244" y="302" width="324" height="3" fill="url(#g50)"/><rect x="1244" y="305" width="328" height="3" fill="url(#g51)"/><rect x="1244" y="308" width="332" height="3" fill="url(#g52)"/><rect x="1244" y="311" width="335" height="3" fill="url(#g53)"/><rect x="1244" y="314" width="339" height="3" fill="url(#g54)"/><rect x="1244" y="317" width="343" height="3" fill="url(#g55)"/><rect x="1245" y="320" width="345" height="3" fill="url(#g56)"/><rect x="1245" y="323" width="349" height="3" fill="url(#g57)"/><rect x="1245" y="326" width="353" height="3" fill="url(#g58)"/><rect x="1245" y="329" width="356" height="3" fill="url(#g59)"/><rect x="1245" y="332" width="360" height="3" fill="url(#g60)"/><rect x="1246" y="335" width="363" height="3" fill="url(#g61)"/><rect x="1246" y="338" width="366" height="3" fill="url(#g62)"/><rect x="1246" y="341" width="370" height="3" fill="url(#g63)"/><rect x="1247" y="344" width="372" height="3" fill="url(#g64)"/><rect x="1247" y="347" width="376" height="3" fill="url(#g65)"/><rect x="1247" y="350" width="380" height="3" fill="url(#g66)"/><rect x="1248" y="353" width="382" height="3" fill="url(#g67)"/><rect x="1248" y="356" width="386" height="3" fill="url(#g68)"/><rect x="1249" y="359" width="388" height="3" fill="url(#g69)"/><rect x="1249" y="362" width="392" height="3" fill="url(#g70)"/><rect x="1249" y="365" width="396" height="3" fill="url(#g71)"/><rect x="1250" y="368" width="398" height="3" fill="url(#g72)"/><rect x="1250" y="371" width="402" height="3" fill="url(#g73)"/><rect x="1251" y="374" width="405" height="3" fill="url(#g74)"/><rect x="1251" y="377" width="408" height="3" fill="url(#g75)"/><rect x="1252" y="380" width="411" height="3" fill="url(#g76)"/><rect x="1252" y="383" width="414" height="3" fill="url(#g77)"/><rect x="1252" y="386" width="418" height="3" fill="url(#g78)"/><rect x="1253" y="389" width="421" height="3" fill="url(#g79)"/><rect x="1253" y="392" width="424" height="3" fill="url(#g80)"/><rect x="1254" y="395" width="427" height="3" fill="url(#g81)"/><rect x="1254" y="398" width="430" height="3" fill="url(#g82)"/><rect x="1255" y="401" width="433" height="3" fill="url(#g83)"/><rect x="1255" y="404" width="437" height="3" fill="url(#g84)"/><rect x="1256" y="407" width="439" height="3" fill="url(#g85)"/><rect x="1256" y="410" width="443" height="3" fill="url(#g86)"/><rect x="1257" y="413" width="445" height="3" fill="url(#g87)"/><rect x="1257" y="416" width="449" height="3" fill="url(#g88)"/><rect x="1258" y="419" width="452" height="3" fill="url(#g89)"/><rect x="1258" y="422" width="455" height="3" fill="url(#g90)"/><rect x="1259" y="425" width="458" height="3" fill="url(#g91)"/><rect x="1259" y="428" width="461" height="3" fill="url(#g92)"/><rect x="1260" y="431" width="464" height="3" fill="url(#g93)"/><rect x="1261" y="434" width="467" height="3" fill="url(#g94)"/><rect x="1261" y="437" width="470" height="3" fill="url(#g95)"/><rect x="1262" y="440" width="473" height="3" fill="url(#g96)"/><rect x="1262" y="443" width="477" height="3" fill="url(#g97)"/><rect x="1263" y="446" width="479" height="3" fill="url(#g98)"/><rect x="1264" y="449" width="482" height="3" fill="url(#g99)"/><rect x="1264" y="452" width="485" height="3" fill="url(#g100)"/><rect x="1265" y="455" width="488" height="3" fill="url(#g101)"/><rect x="1266" y="458" width="491" height="3" fill="url(#g102)"/><rect x="1266" y="461" width="494" height="3" fill="url(#g103)"/><rect x="1267" y="464" width="497" height="3" fill="url(#g104)"/><rect x="1268" y="467" width="500" height="3" fill="url(#g105)"/><rect x="1268" y="470" width="503" height="3" fill="url(#g106)"/><rect x="1269" y="473" width="506" height="3" fill="url(#g107)"/><rect x="1270" y="476" width="508" height="3" fill="url(#g108)"/><rect x="1271" y="479" width="511" height="3" fill="url(#g109)"/><rect x="1271" y="482" width="515" height="3" fill="url(#g110)"/><rect x="1272" y="485" width="517" height="3" fill="url(#g111)"/><rect x="1273" y="488" width="520" height="3" fill="url(#g112)"/><rect x="1274" y="491" width="522" height="3" fill="url(#g113)"/><rect x="1274" y="494" width="526" height="3" fill="url(#g114)"/><rect x="1275" y="497" width="529" height="3" fill="url(#g115)"/><rect x="1276" y="500" width="531" height="3" fill="url(#g116)"/><rect x="1277" y="503" width="534" height="3" fill="url(#g117)"/><rect x="1278" y="506" width="534" height="3" fill="url(#g118)"/><rect x="1279" y="509" width="533" height="3" fill="url(#g119)"/><rect x="1280" y="512" width="527" height="3" fill="url(#g120)"/><rect x="1281" y="515" width="519" height="3" fill="url(#g121)"/><rect x="1282" y="518" width="510" height="3" fill="url(#g122)"/><rect x="1283" y="521" width="502" height="3" fill="url(#g123)"/><rect x="1284" y="524" width="493" height="3" fill="url(#g124)"/><rect x="1285" y="527" width="485" height="3" fill="url(#g125)"/><rect x="1286" y="530" width="476" height="3" fill="url(#g126)"/><rect x="1287" y="533" width="468" height="3" fill="url(#g127)"/><rect x="1288" y="536" width="459" height="3" fill="url(#g128)"/><rect x="1289" y="539" width="451" height="3" fill="url(#g129)"/><rect x="1290" y="542" width="443" height="3" fill="url(#g130)"/><rect x="1291" y="545" width="434" height="3" fill="url(#g131)"/><rect x="1292" y="548" width="426" height="3" fill="url(#g132)"/><rect x="1293" y="551" width="417" height="3" fill="url(#g133)"/><rect x="1294" y="554" width="409" height="3" fill="url(#g134)"/><rect x="1295" y="557" width="400" height="3" fill="url(#g135)"/><rect x="1296" y="560" width="392" height="3" fill="url(#g136)"/><rect x="1298" y="563" width="382" height="3" fill="url(#g137)"/><rect x="1299" y="566" width="374" height="3" fill="url(#g138)"/><rect x="1300" y="569" width="366" height="3" fill="url(#g139)"/><rect x="1301" y="572" width="357" height="3" fill="url(#g140)"/><rect x="1303" y="575" width="348" height="3" fill="url(#g141)"/><rect x="1304" y="578" width="339" height="3" fill="url(#g142)"/><rect x="1305" y="581" width="331" height="3" fill="url(#g143)"/><rect x="1307" y="584" width="321" height="3" fill="url(#g144)"/><rect x="1308" y="587" width="313" height="3" fill="url(#g145)"/><rect x="1309" y="590" width="305" height="3" fill="url(#g146)"/><rect x="1311" y="593" width="295" height="3" fill="url(#g147)"/><rect x="1312" y="596" width="287" height="3" fill="url(#g148)"/><rect x="1314" y="599" width="277" height="3" fill="url(#g149)"/><rect x="1315" y="602" width="269" height="3" fill="url(#g150)"/><rect x="1317" y="605" width="259" height="3" fill="url(#g151)"/><rect x="1318" y="608" width="251" height="3" fill="url(#g152)"/><rect x="1320" y="611" width="241" height="3" fill="url(#g153)"/><rect x="1321" y="614" width="233" height="3" fill="url(#g154)"/><rect x="1323" y="617" width="224" height="3" fill="url(#g155)"/><rect x="1325" y="620" width="214" height="3" fill="url(#g156)"/><rect x="1327" y="623" width="205" height="3" fill="url(#g157)"/><rect x="1329" y="626" width="195" height="3" fill="url(#g158)"/><rect x="1330" y="629" width="187" height="3" fill="url(#g159)"/><rect x="1332" y="632" width="177" height="3" fill="url(#g160)"/><rect x="1334" y="635" width="168" height="3" fill="url(#g161)"/><rect x="1336" y="638" width="158" height="3" fill="url(#g162)"/><rect x="1338" y="641" width="149" height="3" fill="url(#g163)"/><rect x="1340" y="644" width="140" height="3" fill="url(#g164)"/><rect x="1342" y="647" width="130" height="3" fill="url(#g165)"/><rect x="1344" y="650" width="121" height="3" fill="url(#g166)"/><rect x="1346" y="653" width="111" height="3" fill="url(#g167)"/><rect x="1349" y="656" width="101" height="3" fill="url(#g168)"/><rect x="1351" y="659" width="91" height="3" fill="url(#g169)"/><rect x="1353" y="662" width="82" height="3" fill="url(#g170)"/><rect x="1356" y="665" width="72" height="3" fill="url(#g171)"/><rect x="1358" y="668" width="62" height="3" fill="url(#g172)"/><rect x="1361" y="671" width="52" height="3" fill="url(#g173)"/><rect x="1363" y="674" width="42" height="3" fill="url(#g174)"/><rect x="1366" y="677" width="32" height="3" fill="url(#g175)"/><rect x="1368" y="680" width="22" height="3" fill="url(#g176)"/><rect x="1372" y="683" width="11" height="3" fill="url(#g177)"/></g></g>
<path d="M1374.8 684.0 L1371.9 682.4 L1369.3 679.6 L1366.8 676.5 L1364.2 673.4 L1361.7 670.3 L1359.2 667.2 L1356.7 664.1 L1354.2 661.0 L1351.7 657.9 L1349.2 654.7 L1346.7 651.6 L1344.3 648.4 L1342.0 645.1 L1339.8 641.8 L1337.7 638.4 L1335.6 635.0 L1333.5 631.6 L1331.4 628.2 L1329.3 624.8 L1327.2 621.4 L1325.2 617.9 L1323.2 614.4 L1321.3 611.0 L1319.4 607.4 L1317.6 603.9 L1315.8 600.3 L1314.0 596.7 L1312.3 593.1 L1310.6 589.5 L1308.9 585.9 L1307.3 582.2 L1305.6 578.6 L1304.0 574.9 L1302.5 571.3 L1300.9 567.6 L1299.4 563.9 L1297.9 560.2 L1296.5 556.4 L1295.1 552.7 L1293.7 548.9 L1292.3 545.2 L1291.0 541.4 L1289.7 537.6 L1288.4 533.8 L1287.1 530.1 L1285.8 526.3 L1284.5 522.5 L1283.3 518.7 L1282.0 514.9 L1280.8 511.1 L1279.6 507.3 L1278.5 503.4 L1277.3 499.6 L1276.3 495.7 L1275.2 491.9 L1274.2 488.0 L1273.3 484.1 L1272.4 480.2 L1271.4 476.4 L1270.5 472.5 L1269.7 468.6 L1268.8 464.7 L1267.9 460.7 L1267.0 456.8 L1266.2 452.9 L1265.3 449.0 L1264.4 445.1 L1263.6 441.2 L1262.8 437.3 L1261.9 433.4 L1261.1 429.5 L1260.4 425.5 L1259.6 421.6 L1258.9 417.7 L1258.2 413.7 L1257.6 409.8 L1256.9 405.9 L1256.3 401.9 L1255.7 398.0 L1255.1 394.0 L1254.5 390.0 L1253.9 386.1 L1253.3 382.1 L1252.8 378.2 L1252.2 374.2 L1251.6 370.2 L1251.1 366.3 L1250.5 362.3 L1249.9 358.4 L1249.4 354.4 L1248.9 350.4 L1248.4 346.5 L1248.0 342.5 L1247.6 338.5 L1247.2 334.5 L1246.9 330.6 L1246.6 326.6 L1246.3 322.6 L1246.1 318.6 L1245.8 314.6 L1245.6 310.6 L1245.5 306.6 L1245.3 302.6 L1245.1 298.6 L1244.9 294.6 L1244.8 290.6 L1244.6 286.6 L1244.5 282.6 L1244.4 278.6 L1244.3 274.6 L1244.3 270.7 L1244.4 266.7 L1244.5 262.7 L1244.7 258.7 L1244.9 254.7 L1245.3 250.8 L1245.7 246.8 L1246.1 242.8 L1246.6 238.8 L1247.1 234.9 L1247.6 230.9 L1248.2 227.0 L1248.8 223.1 L1249.5 219.1 L1250.3 215.2 L1251.2 211.4 L1252.1 207.6 L1253.2 203.8 L1254.5 200.0 L1255.9 196.4 L1257.4 192.7 L1259.0 189.2 L1260.8 185.6 L1262.6 182.2 L1264.7 178.9 L1266.8 175.7 L1269.1 172.6 L1271.5 169.7 L1274.2 167.0 L1277.0 164.5 L1280.0 162.2 L1283.1 160.1 L1286.4 158.3 L1289.9 156.8 L1293.4 155.5 L1297.0 154.5 L1300.7 153.8 L1304.4 153.4 L1308.2 153.2 L1312.0 153.3 L1315.9 153.6 L1319.7 154.1 L1323.6 154.8 L1327.4 155.6 L1331.2 156.6 L1335.0 157.7 L1338.8 158.9 L1342.6 160.3 L1346.3 161.7 L1350.0 163.1 L1353.7 164.6 L1357.3 166.2 L1361.0 167.8 L1364.6 169.5 L1368.3 171.1 L1371.9 172.8 L1375.5 174.6 L1379.1 176.3 L1382.7 178.1 L1386.2 179.9 L1389.8 181.8 L1393.3 183.6 L1396.9 185.5 L1400.4 187.4 L1403.9 189.3 L1407.4 191.3 L1410.8 193.3 L1414.3 195.3 L1417.8 197.3 L1421.2 199.3 L1424.6 201.4 L1428.0 203.5 L1431.4 205.6 L1434.8 207.7 L1438.2 209.8 L1441.6 212.0 L1444.9 214.2 L1448.3 216.4 L1451.6 218.6 L1454.9 220.8 L1458.3 223.0 L1461.6 225.3 L1464.9 227.5 L1468.2 229.8 L1471.4 232.1 L1474.7 234.4 L1478.0 236.7 L1481.2 239.1 L1484.5 241.4 L1487.7 243.7 L1491.0 246.1 L1494.2 248.4 L1497.4 250.8 L1500.6 253.2 L1503.8 255.6 L1507.0 258.0 L1510.2 260.4 L1513.4 262.8 L1516.6 265.2 L1519.8 267.6 L1523.0 270.1 L1526.1 272.5 L1529.3 275.0 L1532.5 277.4 L1535.6 279.9 L1538.8 282.4 L1541.9 284.8 L1545.0 287.3 L1548.2 289.8 L1551.3 292.3 L1554.4 294.8 L1557.5 297.3 L1560.6 299.9 L1563.7 302.4 L1566.8 304.9 L1569.9 307.4 L1573.0 310.0 L1576.1 312.5 L1579.2 315.0 L1582.3 317.6 L1585.4 320.1 L1588.5 322.7 L1591.6 325.2 L1594.7 327.7 L1597.8 330.3 L1600.8 332.8 L1603.9 335.4 L1607.0 338.0 L1610.1 340.5 L1613.2 343.1 L1616.2 345.6 L1619.3 348.2 L1622.4 350.7 L1625.5 353.3 L1628.6 355.8 L1631.6 358.4 L1634.7 361.0 L1637.8 363.5 L1640.9 366.1 L1643.9 368.6 L1647.0 371.2 L1650.1 373.7 L1653.2 376.3 L1656.2 378.9 L1659.3 381.4 L1662.4 384.0 L1665.5 386.5 L1668.6 389.1 L1671.6 391.6 L1674.7 394.2 L1677.8 396.8 L1680.9 399.3 L1683.9 401.9 L1687.0 404.4 L1690.1 407.0 L1693.2 409.5 L1696.3 412.1 L1699.3 414.6 L1702.4 417.2 L1705.5 419.8 L1708.6 422.3 L1711.6 424.9 L1714.7 427.4 L1717.8 430.0 L1720.9 432.6 L1723.9 435.1 L1727.0 437.7 L1730.1 440.2 L1733.2 442.8 L1736.3 445.3 L1739.3 447.9 L1742.4 450.5 L1745.5 453.0 L1748.6 455.6 L1751.7 458.1 L1754.7 460.7 L1757.8 463.2 L1760.9 465.8 L1764.0 468.3 L1767.1 470.9 L1770.1 473.4 L1773.2 476.0 L1776.3 478.5 L1779.4 481.1 L1782.4 483.7 L1785.5 486.2 L1788.6 488.8 L1791.7 491.3 L1794.8 493.9 L1797.8 496.4 L1800.9 499.0 L1804.0 501.6 L1807.0 504.1 L1809.7 506.4 L1810.9 508.4 L1809.7 510.0 L1806.6 511.5 L1802.9 513.0 L1799.2 514.5 L1795.5 516.0 L1791.8 517.5 L1788.1 519.0 L1784.4 520.5 L1780.7 522.0 L1777.0 523.5 L1773.2 525.0 L1769.5 526.5 L1765.8 528.0 L1762.1 529.5 L1758.4 531.0 L1754.7 532.5 L1751.0 534.0 L1747.3 535.5 L1743.6 537.0 L1739.8 538.5 L1736.1 540.0 L1732.4 541.4 L1728.7 542.9 L1725.0 544.4 L1721.3 545.9 L1717.6 547.4 L1713.9 548.9 L1710.2 550.4 L1706.5 551.9 L1702.7 553.4 L1699.0 554.9 L1695.3 556.4 L1691.6 557.9 L1687.9 559.4 L1684.2 560.9 L1680.5 562.4 L1676.8 563.9 L1673.1 565.4 L1669.3 566.9 L1665.6 568.4 L1661.9 569.9 L1658.2 571.4 L1654.5 572.9 L1650.8 574.4 L1647.1 575.9 L1643.4 577.4 L1639.7 578.9 L1635.9 580.4 L1632.2 581.8 L1628.5 583.3 L1624.8 584.8 L1621.1 586.3 L1617.4 587.8 L1613.7 589.3 L1610.0 590.8 L1606.3 592.3 L1602.5 593.8 L1598.8 595.3 L1595.1 596.8 L1591.4 598.3 L1587.7 599.8 L1584.0 601.3 L1580.3 602.8 L1576.6 604.3 L1572.9 605.8 L1569.2 607.3 L1565.4 608.8 L1561.7 610.3 L1558.0 611.8 L1554.3 613.3 L1550.6 614.8 L1546.9 616.3 L1543.2 617.8 L1539.5 619.3 L1535.8 620.8 L1532.0 622.3 L1528.3 623.7 L1524.6 625.2 L1520.9 626.7 L1517.2 628.2 L1513.5 629.7 L1509.8 631.2 L1506.1 632.7 L1502.4 634.2 L1498.6 635.7 L1494.9 637.2 L1491.2 638.7 L1487.5 640.2 L1483.8 641.7 L1480.1 643.2 L1476.4 644.7 L1472.7 646.2 L1469.0 647.7 L1465.3 649.2 L1461.5 650.7 L1457.8 652.2 L1454.1 653.7 L1450.4 655.2 L1446.7 656.7 L1443.0 658.2 L1439.3 659.7 L1435.6 661.2 L1431.9 662.7 L1428.1 664.1 L1424.4 665.6 L1420.7 667.1 L1417.0 668.6 L1413.3 670.1 L1409.6 671.6 L1405.9 673.1 L1402.2 674.6 L1398.5 676.1 L1394.7 677.6 L1391.0 679.1 L1387.3 680.6 L1383.6 682.1 L1379.9 683.5 L1376.4 684.2ZM1749.1 475.6 L1478.8 296.6 L1359.5 654.6Z" fill="#000" fill-rule="evenodd" opacity=".40"/>
<g filter="url(#vb)" shape-rendering="crispEdges"><rect x="1671" y="139" width="234" height="7" fill="url(#i0)"/><rect x="1671" y="146" width="234" height="7" fill="url(#i1)"/><rect x="1671" y="153" width="234" height="7" fill="url(#i2)"/><rect x="1671" y="160" width="234" height="7" fill="url(#i3)"/><rect x="1671" y="167" width="234" height="7" fill="url(#i4)"/><rect x="1671" y="174" width="234" height="7" fill="url(#i5)"/><rect x="1671" y="181" width="234" height="7" fill="url(#i6)"/><rect x="1671" y="188" width="234" height="7" fill="url(#i7)"/><rect x="1671" y="195" width="234" height="7" fill="url(#i8)"/><rect x="1671" y="202" width="234" height="7" fill="url(#i9)"/><rect x="1671" y="209" width="234" height="7" fill="url(#i10)"/><rect x="1671" y="216" width="234" height="7" fill="url(#i11)"/><rect x="1671" y="223" width="234" height="7" fill="url(#i12)"/><rect x="1671" y="230" width="234" height="7" fill="url(#i13)"/><rect x="1671" y="237" width="234" height="7" fill="url(#i14)"/><rect x="1671" y="244" width="234" height="7" fill="url(#i15)"/><rect x="1671" y="251" width="234" height="7" fill="url(#i16)"/><rect x="1671" y="258" width="234" height="7" fill="url(#i17)"/><rect x="1671" y="265" width="234" height="7" fill="url(#i18)"/><rect x="1671" y="272" width="234" height="7" fill="url(#i19)"/><rect x="1671" y="279" width="234" height="7" fill="url(#i20)"/><rect x="1671" y="286" width="234" height="7" fill="url(#i21)"/><rect x="1671" y="293" width="234" height="7" fill="url(#i22)"/><rect x="1671" y="300" width="234" height="7" fill="url(#i23)"/><rect x="1671" y="307" width="234" height="7" fill="url(#i24)"/><rect x="1671" y="314" width="234" height="7" fill="url(#i25)"/><rect x="1671" y="321" width="234" height="7" fill="url(#i26)"/><rect x="1671" y="328" width="234" height="7" fill="url(#i27)"/><rect x="1671" y="335" width="234" height="7" fill="url(#i28)"/></g>
<rect x="1669.5" y="137.5" width="237" height="206" fill="none" stroke="#4c4c4c" stroke-width="3"/><rect x="1671.5" y="139.5" width="233" height="202" fill="none" stroke="#909090" stroke-width="1"/>
<rect x="1741.6" y="466.9" width="15" height="15" fill="none" stroke="#f4f4f4" stroke-width="2"/>
<rect x="1471.3" y="287.9" width="15" height="15" fill="none" stroke="#f4f4f4" stroke-width="2"/>
<rect x="1352.0" y="645.9" width="15" height="15" fill="none" stroke="#f4f4f4" stroke-width="2"/>
<rect x="1411.4" y="467.8" width="15" height="15" fill="none" stroke="#f4f4f4" stroke-width="2"/>
<rect x="1487.9" y="583.5" width="15" height="15" fill="none" stroke="#f4f4f4" stroke-width="2"/>
<rect x="1566.1" y="350.7" width="15" height="15" fill="none" stroke="#f4f4f4" stroke-width="2"/>
<rect x="1481.4" y="467.6" width="15" height="15" fill="none" stroke="#000" stroke-width="2"/>
<circle cx="1477.6" cy="283.7" r="5" fill="#0a8a0a" stroke="#111" stroke-width="1.5"/>
<circle cx="1548.0" cy="332.7" r="5" fill="#c8c020" stroke="#111" stroke-width="1.5"/>
<circle cx="1731.6" cy="472.0" r="5" fill="#c80000" stroke="#111" stroke-width="1.5"/>
<circle cx="1475.2" cy="479.4" r="5" fill="#fff" stroke="#111" stroke-width="1.5"/>
<circle cx="1449.0" cy="508.1" r="5.5" fill="#b4b4b4" stroke="#111" stroke-width="1.5"/>
<circle cx="1405.3" cy="519.0" r="5" fill="#10b8b8" stroke="#111" stroke-width="1.5"/>
<circle cx="1436.7" cy="619.1" r="5" fill="#c010b0" stroke="#111" stroke-width="1.5"/>
<circle cx="1361.9" cy="654.9" r="4" fill="#0000a0" stroke="#111" stroke-width="1.5"/>
<rect x="1779.5" y="232.5" width="15" height="15" fill="#fff" stroke="#000" stroke-width="2"/>
<circle cx="1707.3" cy="265" r="5.2" fill="#fff" stroke="#111" stroke-width="1.5"/>
</svg>
<div style="position:absolute;left:200px;top:977px;width:1720px;height:63px;background:linear-gradient(#444,#363636 35%,#2b2b2b);"></div>
<div style="position:absolute;left:201px;top:978px;width:150px;height:61px;background:linear-gradient(#929292,#7c7c7c 60%,#666);border:1px solid #4a4a4a;border-radius:5px;"></div>
<div style="position:absolute;left:206px;top:982px;width:141px;height:38px;background:#c0c0c0;border-radius:4px;box-shadow:0 0 0 1px rgba(255,255,255,.25), inset 0 0 2px rgba(0,0,0,.4);"></div>
<span class="t" style="left:276.0px;top:1024.2px;font-size:11px;color:#4a4a4a;font-weight:700;transform:translateX(-50%) scaleX(0.968);transform-origin:50% 0;">White</span>
<div style="position:absolute;left:353px;top:978px;width:150px;height:61px;background:linear-gradient(#929292,#7c7c7c 60%,#666);border:1px solid #4a4a4a;border-radius:5px;"></div>
<div style="position:absolute;left:358px;top:982px;width:141px;height:38px;background:#c40000;border-radius:4px;box-shadow:0 0 0 1px rgba(255,255,255,.25), inset 0 0 2px rgba(0,0,0,.4);"></div>
<span class="t" style="left:428.0px;top:1024.2px;font-size:11px;color:#4a4a4a;font-weight:700;transform:translateX(-50%) scaleX(0.890);transform-origin:50% 0;">Red</span>
<div style="position:absolute;left:505px;top:978px;width:150px;height:61px;background:linear-gradient(#929292,#7c7c7c 60%,#666);border:1px solid #4a4a4a;border-radius:5px;"></div>
<div style="position:absolute;left:510px;top:982px;width:141px;height:38px;background:#00c400;border-radius:4px;box-shadow:0 0 0 1px rgba(255,255,255,.25), inset 0 0 2px rgba(0,0,0,.4);"></div>
<span class="t" style="left:580.0px;top:1024.2px;font-size:11px;color:#4a4a4a;font-weight:700;transform:translateX(-50%) scaleX(0.943);transform-origin:50% 0;">Green</span>
<div style="position:absolute;left:657px;top:978px;width:150px;height:61px;background:linear-gradient(#929292,#7c7c7c 60%,#666);border:1px solid #4a4a4a;border-radius:5px;"></div>
<div style="position:absolute;left:662px;top:982px;width:141px;height:38px;background:#0000c4;border-radius:4px;box-shadow:0 0 0 1px rgba(255,255,255,.25), inset 0 0 2px rgba(0,0,0,.4);"></div>
<span class="t" style="left:732.0px;top:1024.2px;font-size:11px;color:#4a4a4a;font-weight:700;transform:translateX(-50%) scaleX(0.944);transform-origin:50% 0;">Blue</span>
<div style="position:absolute;left:809px;top:978px;width:150px;height:61px;background:linear-gradient(#929292,#7c7c7c 60%,#666);border:1px solid #4a4a4a;border-radius:5px;"></div>
<div style="position:absolute;left:814px;top:982px;width:141px;height:38px;background:#00c4c4;border-radius:4px;box-shadow:0 0 0 1px rgba(255,255,255,.25), inset 0 0 2px rgba(0,0,0,.4);"></div>
<span class="t" style="left:884.0px;top:1024.2px;font-size:11px;color:#4a4a4a;font-weight:700;transform:translateX(-50%) scaleX(0.892);transform-origin:50% 0;">Cyan</span>
<div style="position:absolute;left:961px;top:978px;width:150px;height:61px;background:linear-gradient(#929292,#7c7c7c 60%,#666);border:1px solid #4a4a4a;border-radius:5px;"></div>
<div style="position:absolute;left:966px;top:982px;width:141px;height:38px;background:#c400c4;border-radius:4px;box-shadow:0 0 0 1px rgba(255,255,255,.25), inset 0 0 2px rgba(0,0,0,.4);"></div>
<span class="t" style="left:1036.0px;top:1024.2px;font-size:11px;color:#4a4a4a;font-weight:700;transform:translateX(-50%) scaleX(0.975);transform-origin:50% 0;">Magenta</span>
<div style="position:absolute;left:1113px;top:978px;width:150px;height:61px;background:linear-gradient(#929292,#7c7c7c 60%,#666);border:1px solid #4a4a4a;border-radius:5px;"></div>
<div style="position:absolute;left:1118px;top:982px;width:141px;height:38px;background:#c4c400;border-radius:4px;box-shadow:0 0 0 1px rgba(255,255,255,.25), inset 0 0 2px rgba(0,0,0,.4);"></div>
<span class="t" style="left:1188.0px;top:1024.2px;font-size:11px;color:#4a4a4a;font-weight:700;transform:translateX(-50%) scaleX(0.934);transform-origin:50% 0;">Yellow</span>
<div style="position:absolute;left:1265px;top:978px;width:150px;height:61px;background:linear-gradient(#565656,#464646 60%,#3a3a3a);border:1px solid #4e4e4e;border-radius:5px;"></div>
<div style="position:absolute;left:1270px;top:982px;width:141px;height:38px;background:#ffffff;border-radius:4px;box-shadow:0 0 0 1px rgba(255,255,255,.3);"></div>
<span class="t" style="left:1340.0px;top:1024.2px;font-size:11px;color:#f0f0f0;font-weight:700;transform:translateX(-50%) scaleX(1.026);transform-origin:50% 0;">100W</span>
<div style="position:absolute;left:1597px;top:978px;width:49px;height:19px;background:linear-gradient(#a6a6a6,#8a8a8a 50%,#7c7c7c 52%,#6c6c6c);border:1px solid #5a5a5a;border-radius:5px 5px 0 0;"></div>
<div style="position:absolute;left:1597px;top:996px;width:49px;height:43px;background:linear-gradient(#8e8e8e,#777 50%,#6a6a6a 52%,#606060);border:1px solid #5a5a5a;border-radius:0 0 5px 5px;"></div>
<div style="position:absolute;left:1612px;top:980px;width:19px;height:13px;background:radial-gradient(ellipse,#8a8a8a,#777);border-radius:50%;"></div>
<svg style="left:1617px;top:983px" width="9" height="6" viewBox="0 0 9 6"><path d="M0.3 5.7L4.5 0.5L8.7 5.7Z" fill="#444"/></svg>
<div style="position:absolute;left:1605px;top:1002px;width:33px;height:33px;background:linear-gradient(#bdbdbd,#a0a0a0 48%,#8a8a8a 52%,#909090);border:3px solid #2a2a2a;border-radius:5px;box-shadow:0 0 0 1px #aaa;"></div>
<div style="position:absolute;left:1614px;top:1011px;width:15px;height:15px;background:#000;"></div>
<div style="position:absolute;left:1646px;top:978px;width:47px;height:30px;background:linear-gradient(#a6a6a6,#8a8a8a 50%,#7c7c7c 52%,#6c6c6c);border:1px solid #5a5a5a;border-radius:5px 0 0 0;"></div>
<div style="position:absolute;left:1659.5px;top:983px;width:20px;height:20px;background:radial-gradient(circle at 50% 40%,#8c8c8c,#737373);border-radius:50%;"></div>
<div style="position:absolute;left:1692px;top:978px;width:46px;height:30px;background:linear-gradient(#a6a6a6,#8a8a8a 50%,#7c7c7c 52%,#6c6c6c);border:1px solid #5a5a5a;"></div>
<div style="position:absolute;left:1705.0px;top:983px;width:20px;height:20px;background:radial-gradient(circle at 50% 40%,#8c8c8c,#737373);border-radius:50%;"></div>
<div style="position:absolute;left:1737px;top:978px;width:46px;height:30px;background:linear-gradient(#a6a6a6,#8a8a8a 50%,#7c7c7c 52%,#6c6c6c);border:1px solid #5a5a5a;"></div>
<div style="position:absolute;left:1750.0px;top:983px;width:20px;height:20px;background:radial-gradient(circle at 50% 40%,#8c8c8c,#737373);border-radius:50%;"></div>
<div style="position:absolute;left:1782px;top:978px;width:46px;height:30px;background:linear-gradient(#a6a6a6,#8a8a8a 50%,#7c7c7c 52%,#6c6c6c);border:1px solid #5a5a5a;"></div>
<div style="position:absolute;left:1795.0px;top:983px;width:20px;height:20px;background:radial-gradient(circle at 50% 40%,#8c8c8c,#737373);border-radius:50%;"></div>
<div style="position:absolute;left:1827px;top:978px;width:46px;height:30px;background:linear-gradient(#a6a6a6,#8a8a8a 50%,#7c7c7c 52%,#6c6c6c);border:1px solid #5a5a5a;"></div>
<div style="position:absolute;left:1840.0px;top:983px;width:20px;height:20px;background:radial-gradient(circle at 50% 40%,#8c8c8c,#737373);border-radius:50%;"></div>
<svg style="left:1665.5px;top:989px" width="8" height="8"><rect width="8" height="8" fill="#3a3a3a"/></svg>
<svg style="left:1711.0px;top:988px" width="9" height="10" viewBox="0 0 9 10"><path d="M0.5 0.3V9.7L8.7 5Z" fill="#3a3a3a"/></svg>
<span class="t" style="left:1760.0px;top:988.1px;font-size:10.5px;color:#3a3a3a;font-weight:700;transform:translateX(-50%);transform-origin:50% 0;">[··]</span>
<span class="t" style="left:1805.0px;top:985.3px;font-size:15px;color:#3a3a3a;font-weight:700;transform:translateX(-50%);transform-origin:50% 0;">∞</span>
<svg style="left:1844.0px;top:987px" width="12" height="12" viewBox="-6 -6 12 12"><path d="M-4 -1A4.2 4.2 0 0 1 3.5 -2.3" fill="none" stroke="#3a3a3a" stroke-width="2"/><path d="M4 1A4.2 4.2 0 0 1 -3.5 2.3" fill="none" stroke="#3a3a3a" stroke-width="2"/><path d="M1.5 -2.2H5V-5.5Z M-1.5 2.2H-5V5.5Z" fill="#3a3a3a"/></svg>
<div style="position:absolute;left:1872px;top:978px;width:47px;height:30px;background:linear-gradient(#3a3a3a,#2c2c2c);border-radius:0 5px 0 0;"></div>
<div style="position:absolute;left:1884px;top:982px;width:22px;height:22px;background:#2a2a2a;border-radius:50%;"></div>
<div style="position:absolute;left:1646px;top:1009px;width:137px;height:30px;background:linear-gradient(#a6a6a6,#8a8a8a 50%,#7c7c7c 52%,#6c6c6c);border:1px solid #5a5a5a;border-radius:0 0 0 5px;"></div>
<div style="position:absolute;left:1782px;top:1009px;width:137px;height:30px;background:linear-gradient(#a6a6a6,#8a8a8a 50%,#7c7c7c 52%,#6c6c6c);border:1px solid #5a5a5a;border-radius:0 0 5px 0;"></div>
<div style="position:absolute;left:1667px;top:1014px;width:20px;height:20px;background:radial-gradient(circle at 50% 40%,#8c8c8c,#737373);border-radius:50%;"></div>
<div style="position:absolute;left:1880px;top:1014px;width:20px;height:20px;background:radial-gradient(circle at 50% 40%,#8c8c8c,#737373);border-radius:50%;"></div>
<span class="t" style="left:1677.5px;top:1016.3px;font-size:15px;color:#3a3a3a;font-weight:700;transform:translateX(-50%);transform-origin:50% 0;">«</span>
<span class="t" style="left:1890.5px;top:1016.3px;font-size:15px;color:#3a3a3a;font-weight:700;transform:translateX(-50%);transform-origin:50% 0;">»</span>
<span class="t" style="left:1703.5px;top:1013.6px;font-size:20.5px;color:#333;font-weight:700;transform:scaleX(1.030);transform-origin:0 0;">Back</span>
<span class="t" style="left:1810.5px;top:1013.6px;font-size:20.5px;color:#333;font-weight:700;transform:scaleX(1.159);transform-origin:0 0;">Next</span>
<div style="position:absolute;left:0px;top:1040px;width:1920px;height:40px;background:#9a403c;"></div>
<div style="position:absolute;left:17px;top:1041px;width:59px;height:39px;background:rgba(255,255,255,.22);border:1px solid rgba(255,255,255,.3);"></div>
<div style="position:absolute;left:265px;top:1041px;width:53px;height:39px;background:rgba(255,255,255,.55);border:1px solid rgba(255,255,255,.7);"></div>
<div style="position:absolute;left:319px;top:1041px;width:4px;height:39px;background:rgba(255,255,255,.35);border:1px solid rgba(255,255,255,.6);border-left:none;"></div>
<svg style="left:28px;top:1044px" width="36" height="32" viewBox="0 0 36 32"><path d="M2 6h10l2 3h16v19H2z" fill="#f3d98a" stroke="#d0ad52"/><path d="M8 3h9l2 3h13v18H8z" fill="#fbeeb4" stroke="#d8b860"/><rect x="10" y="2" width="3" height="2" fill="#3a3"/><rect x="20" y="6" width="3" height="2" fill="#d33"/><rect x="25" y="8" width="3" height="2" fill="#36c"/><path d="M7 18h20v11h-5v-5h-10v5H7z" fill="#8fc8ee" stroke="#5a9cd0"/><rect x="9" y="20" width="16" height="2" fill="#d8eefc"/></svg>
<span class="t" style="left:109.0px;top:1039.1px;font-size:40px;color:#2aa0ea;font-weight:700;transform:translateX(-50%);transform-origin:50% 0;text-shadow:0 0 1px #1570b8;">e</span>
<svg style="left:88px;top:1042px" width="40" height="36" viewBox="0 0 40 36"><ellipse cx="20" cy="18" rx="18" ry="7.5" fill="none" stroke="#f2c128" stroke-width="2.6" transform="rotate(-32 20 18)" stroke-dasharray="62 22" stroke-dashoffset="-8"/></svg>
<svg style="left:152px;top:1044px" width="36" height="34" viewBox="0 0 36 34"><ellipse cx="15" cy="19" rx="13" ry="11" fill="#d8d8d8" stroke="#999"/><circle cx="9" cy="16" r="2.5" fill="#e33"/><circle cx="15" cy="12" r="2.5" fill="#3a3"/><circle cx="21" cy="15" r="2.5" fill="#36d"/><circle cx="10" cy="23" r="2.5" fill="#ec3"/><path d="M30 2L33 5L20 24L17 25L18 22Z" fill="#e8a040" stroke="#a63"/></svg>
<div style="position:absolute;left:215px;top:1044px;width:32px;height:32px;background:linear-gradient(#2a3ad0,#101880 50%,#000 51%,#111);border-radius:6px;"></div>
<div style="position:absolute;left:221px;top:1048px;width:4px;height:13px;background:#fff;"></div>
<div style="position:absolute;left:228px;top:1054px;width:4px;height:7px;background:#fff;"></div>
<div style="position:absolute;left:236px;top:1057px;width:4px;height:4px;background:#fff;"></div>
<div style="position:absolute;left:221px;top:1065px;width:4px;height:8px;background:#fff;"></div>
<div style="position:absolute;left:228px;top:1065px;width:4px;height:8px;background:#fff;"></div>
<div style="position:absolute;left:235px;top:1065px;width:4px;height:8px;background:#fff;"></div>
<svg style="left:274px;top:1043px" width="36" height="34" viewBox="0 0 36 34"><path d="M4 16C4 6 8 1 11 2C18 8 28 17 33 23L9 32C5 28 4 22 4 16Z" fill="#c01818"/><path d="M6 16C6 9 9 4 11 4C15 8 20 13 24 18L10 28C7 25 6 20 6 16Z" fill="#1a1a1a"/><path d="M10 12L20 18L11 24Z" fill="#2a8a2a" opacity=".8"/></svg>
<span class="t" style="left:291.0px;top:1056.0px;font-size:13px;color:#eee;font-weight:700;font-style:italic;transform:translateX(-50%);transform-origin:50% 0;">5</span>
<svg style="left:1516.0px;top:1052.0px" width="18" height="18" viewBox="0 0 18 18"><rect x="1" y="2" width="16" height="14" fill="#d8d8d8" stroke="#999"/><path d="M5 5l3 3v5M8 8l2-3M11 5v8m0-4h3" stroke="#222" stroke-width="1.6" fill="none"/></svg>
<svg style="left:1540.0px;top:1052.0px" width="18" height="18" viewBox="0 0 18 18"><rect x="2" y="2" width="14" height="15" fill="#2a2a2a" stroke="#ddd"/><path d="M4 5h10M4 7.5h10M4 10h10M4 12.5h10M4 15h10" stroke="#ccc" stroke-width="1"/></svg>
<svg style="left:1564.0px;top:1052.0px" width="18" height="18" viewBox="0 0 18 18"><path d="M1 9c3-4 7-5 10-4v-1.5h6v11h-6V13c-4 1-8-1-10-4z" fill="#76b900"/><path d="M4 9c2-2 4-2.6 6-2.2v5c-2 .3-4-.6-6-2.800z" fill="#9a403c"/><circle cx="8" cy="9" r="1.6" fill="#76b900"/></svg>
<svg style="left:1588.0px;top:1052.0px" width="18" height="18" viewBox="0 0 18 18"><rect x="1" y="1" width="16" height="16" rx="2" fill="#1e88e0"/><rect x="4" y="3" width="10" height="7" fill="none" stroke="#fff" stroke-width="1.3"/><path d="M6 5l6 4M12 5l-6 4" stroke="#fff" stroke-width="1"/><path d="M4 13h6M8 15h6" stroke="#ffe040" stroke-width="1.6"/></svg>
<svg style="left:1612.0px;top:1052.0px" width="18" height="18" viewBox="0 0 18 18"><path d="M2 6.500h3l5-4.500v14l-5-4.500H2z" fill="#f07030" stroke="#a03010" stroke-width=".8"/><path d="M12 5.500c1.800 2 1.800 5 0 7M14.200 3.500c3 3.200 3 7.800 0 11" fill="none" stroke="#c04818" stroke-width="1.200"/></svg>
<svg style="left:1636.0px;top:1052.0px" width="18" height="18" viewBox="0 0 18 18"><rect x="1.500" y="2" width="15" height="11" fill="#8a8a90" stroke="#3040c0" stroke-width="1.400"/><path d="M2 16h5M11 16h5" stroke="#5030a0" stroke-width="1.600"/><path d="M9 13v3" stroke="#3040c0" stroke-width="1.400"/></svg>
<svg style="left:1660.0px;top:1052.0px" width="18" height="18" viewBox="0 0 18 18"><path d="M3 13c-2-3 1-5 4-5-1-3 3-5 5-3 3 0 4 3 2 5 2 2 0 5-3 4-3 1-6 1-8-1z" fill="#3a3030" stroke="#c8c0c0" stroke-width=".8"/><path d="M4 9c3-2 7-2 10 0M4 12c3-2 7-2 10 0" stroke="#bbb" fill="none"/><path d="M11 11l5 5M16 11l-5 5" stroke="#e02020" stroke-width="1.800"/></svg>
<svg style="left:1684.0px;top:1052.0px" width="18" height="18" viewBox="0 0 18 18"><rect x="1" y="1" width="16" height="16" fill="#1a6a9a"/><rect x="4" y="4" width="10" height="7" fill="#e8f4ff" stroke="#fff"/><path d="M6 6h6M6 8h4" stroke="#1a6a9a"/><path d="M5 14h8" stroke="#fff" stroke-width="1.500"/></svg>
<svg style="left:1708.0px;top:1052.0px" width="18" height="18" viewBox="0 0 18 18"><rect x="1" y="4" width="16" height="10" fill="#111"/><path d="M2 6h14M2 9h14M2 12h14" stroke="#fff" stroke-width="1.800" stroke-dasharray="2 1"/></svg>
<svg style="left:1732.0px;top:1052.0px" width="18" height="18" viewBox="0 0 18 18"><rect x="9" y="3.500" width="7" height="12" fill="none" stroke="#fff" stroke-width="1.600"/><rect x="11" y="1.500" width="3" height="2" fill="#fff"/><path d="M4 2v4M7 2v4M3 6h5v3l-1.500 2v4h-2v-4L3 9z" fill="#fff" stroke="#fff" stroke-width=".8"/></svg>
<svg style="left:1756.0px;top:1052.0px" width="18" height="18" viewBox="0 0 18 18"><path d="M4 2v15" stroke="#fff" stroke-width="1.800"/><path d="M5 3c3-1.500 5 1.500 8 0 1.500-.6 2.500-.5 3 0v6c-3-1-5 1.500-8 .5-1.500-.5-2.500-.3-3 0z" fill="#fff"/></svg>
<svg style="left:1780.0px;top:1052.0px" width="18" height="18" viewBox="0 0 18 18"><path d="M2 16v-2M5 16v-4M8 16v-6" stroke="#fff" stroke-width="2"/><path d="M11 16v-9M14 16V4" stroke="#c9a09c" stroke-width="2"/></svg>
<svg style="left:1804.0px;top:1052.0px" width="18" height="18" viewBox="0 0 18 18"><path d="M3 7h3l4-4v12l-4-4H3z" fill="#fff"/><path d="M12 6c1.500 1.800 1.500 4.200 0 6" fill="none" stroke="#fff" stroke-width="1.300"/></svg>
<span class="t" style="left:1867.5px;top:1046.8px;font-size:12px;color:#ffe8e4;transform:translateX(-50%) scaleX(0.966);transform-origin:50% 0;">23:38</span>
<span class="t" style="left:1866.7px;top:1063.8px;font-size:12px;color:#ffe8e4;transform:translateX(-50%) scaleX(0.899);transform-origin:50% 0;">09.07.2013</span>
</body></html>
